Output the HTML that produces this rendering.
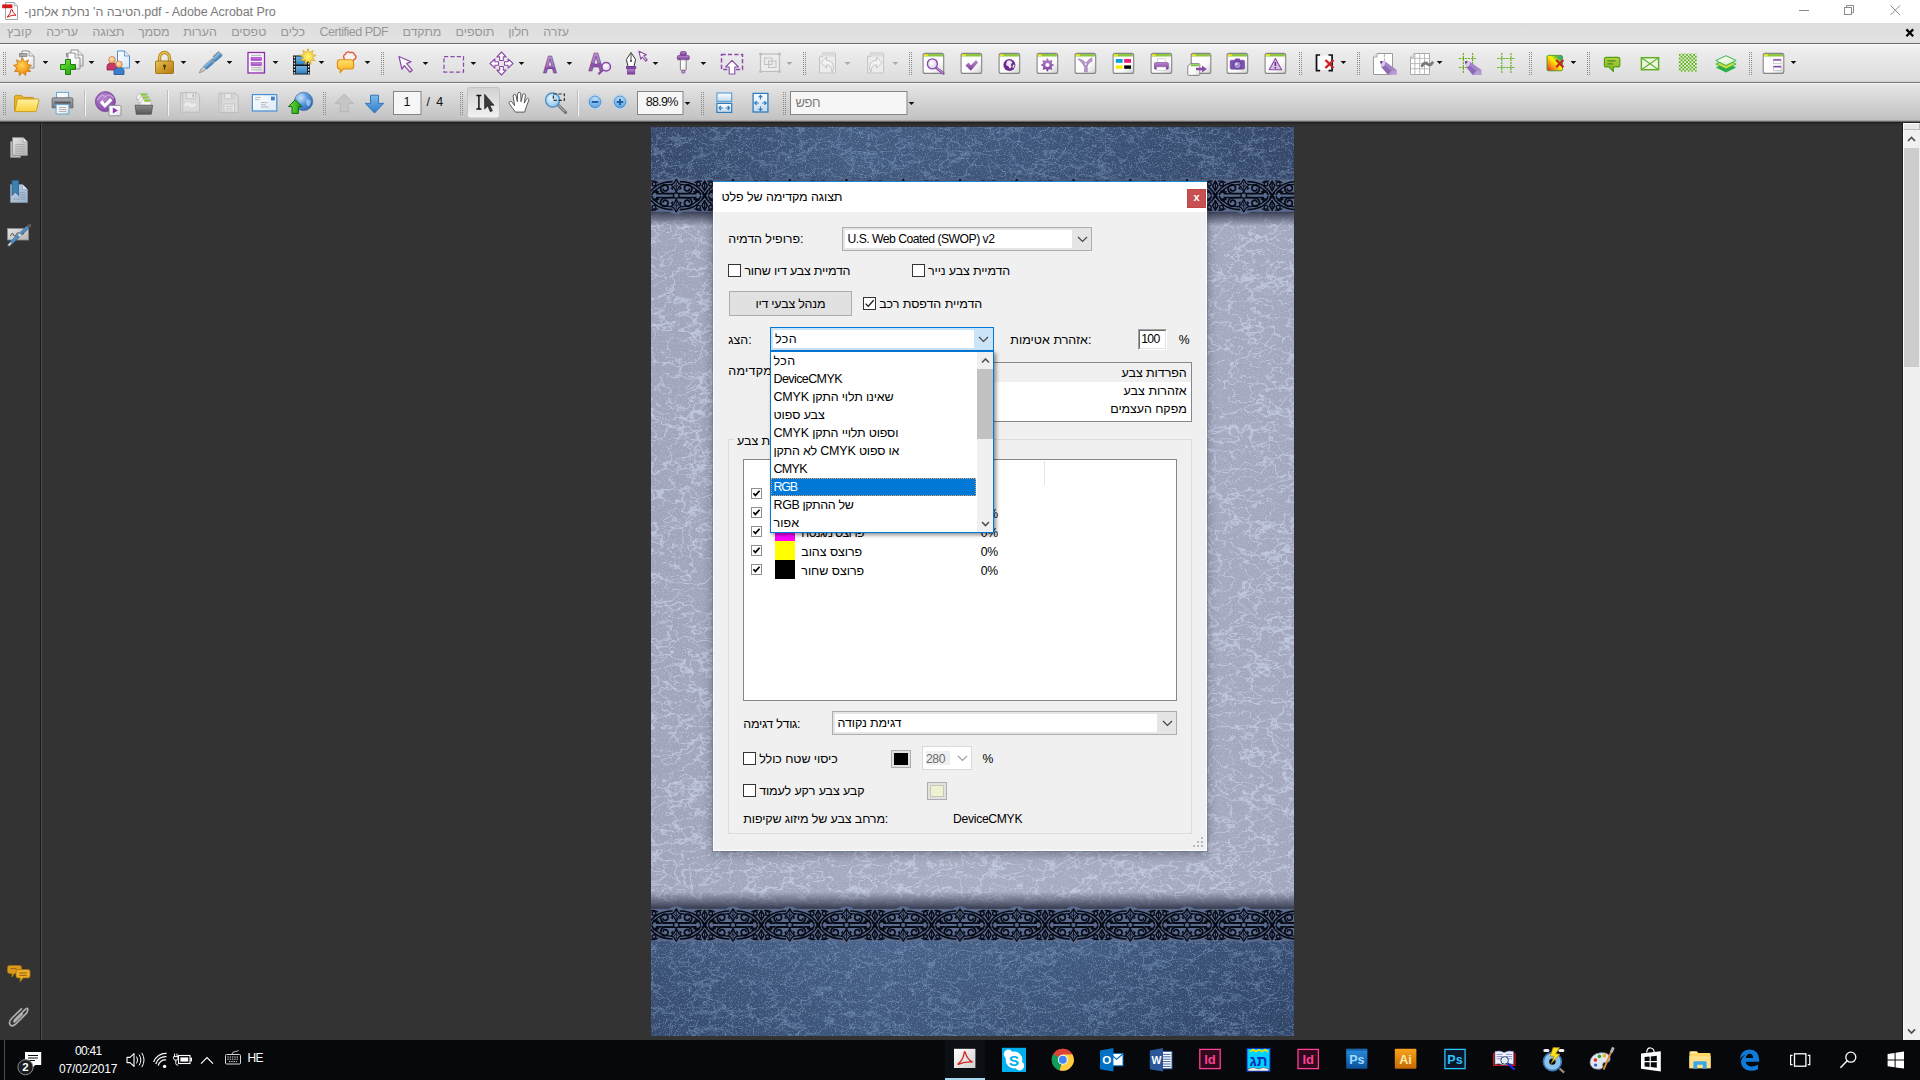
<!DOCTYPE html>
<html lang="he" dir="ltr">
<head>
<meta charset="utf-8">
<title>Adobe Acrobat Pro</title>
<style>
*{box-sizing:border-box;margin:0;padding:0}
html,body{width:1920px;height:1080px;overflow:hidden;background:#333;font-family:"Liberation Sans","DejaVu Sans",sans-serif;font-size:12px;color:#000}
.abs{position:absolute}
.t{position:absolute;white-space:nowrap;font-size:12.5px;line-height:14px;color:#000;direction:ltr}
#page{position:absolute;left:651px;top:127px;width:643px;height:909px;overflow:hidden}
#dlgc{position:absolute;left:0;top:0;width:1920px;height:1080px}

#titlebar{position:absolute;left:0;top:0;width:1920px;height:23px;background:#fff}
#menubar{position:absolute;left:0;top:23px;width:1920px;height:21px;background:linear-gradient(#dedede,#e2e2e2 19px,#dadada 20px,#6e6e6e 20px)}
#tb1{position:absolute;left:0;top:44px;width:1920px;height:39px;background:linear-gradient(#f6f6f6 0,#ededed 6px,#e6e6e6 20px,#dcdcdc 37px,#c9c9c9 38px,#7b7b7b 38px)}
#tb2{position:absolute;left:0;top:83px;width:1920px;height:39px;background:linear-gradient(#f4f4f4 0,#e5e5e5 2px,#d3d3d3 19px,#c5c5c5 34px,#bfbfbf 37px,#8a8a8a 38px,#444 39px)}
#main{position:absolute;left:0;top:122px;width:1920px;height:918px;background:linear-gradient(#1c1c1c 0,#2d2d2d 2px,#333 4px)}
#taskbar{position:absolute;left:0;top:1040px;width:1920px;height:40px;background:#06080c}

#t1{letter-spacing:-0.097px}#t2{letter-spacing:-0.068px}#t3{letter-spacing:-0.507px}#t4{letter-spacing:-0.236px}#t5{letter-spacing:-0.150px}#t6{letter-spacing:-0.234px}#t7{letter-spacing:-0.065px}#t8{letter-spacing:-0.029px}#t9{letter-spacing:0.019px}#t10{letter-spacing:-0.665px}#t11{letter-spacing:-1.094px}#t12{letter-spacing:0.251px}#t13{letter-spacing:-0.063px}#t14{letter-spacing:0.028px}#t15{letter-spacing:-0.087px}#t16{letter-spacing:-0.063px}#t17{letter-spacing:-0.120px}#t18{letter-spacing:0.551px}#t19{letter-spacing:-0.362px}#t20{letter-spacing:-0.742px}#t21{letter-spacing:-0.362px}#t22{letter-spacing:-0.055px}#t23{letter-spacing:-0.362px}#t24{letter-spacing:-0.036px}#t25{letter-spacing:-0.362px}#t26{letter-spacing:-0.286px}#t27{letter-spacing:-0.109px}#t28{letter-spacing:-0.081px}#t29{letter-spacing:-0.415px}#t30{letter-spacing:-0.344px}#t31{letter-spacing:-0.131px}#t32{letter-spacing:-0.142px}#t33{letter-spacing:-0.337px}#t34{letter-spacing:0.447px}#t35{letter-spacing:0.380px}#t36{letter-spacing:-0.588px}#t37{letter-spacing:-0.171px}#t38{letter-spacing:-0.088px}#t39{letter-spacing:-0.185px}#t40{letter-spacing:-0.196px}#t41{letter-spacing:-0.669px}#t42{letter-spacing:-1.200px}#t43{letter-spacing:-0.395px}#t44{letter-spacing:0.073px}#c1{letter-spacing:-0.058px}#c2{letter-spacing:0.136px}#c3{letter-spacing:0.102px}#c4{letter-spacing:0.009px}#c5{letter-spacing:-0.122px}#c6{letter-spacing:-0.013px}#c7{letter-spacing:-0.104px}#c8{letter-spacing:0.070px}#c9{letter-spacing:-0.487px}#c10{letter-spacing:-0.138px}#c11{letter-spacing:-0.019px}#c12{letter-spacing:-0.165px}#c13{letter-spacing:0.038px}#c14{letter-spacing:-0.253px}#c15{letter-spacing:1.465px}#c16{letter-spacing:-0.731px}#c17{letter-spacing:-0.428px}#c18{letter-spacing:-0.686px}#c19{letter-spacing:-0.176px}#c20{letter-spacing:-0.736px}
</style>
</head>
<body>
<div id="main"></div>
<div id="titlebar"></div><svg class="abs" style="left:2px;top:1px" width="18" height="20" viewBox="0 0 18 20"><path d="M3.5,1.5 h8.6 l3.4,3.4 v13.6 h-12 z" fill="#fdfdfd" stroke="#9a9a9a" stroke-width=".9"/><path d="M12.1,1.5 v3.4 h3.4" fill="#e4e4e4" stroke="#9a9a9a" stroke-width=".7"/><rect x="0.2" y="3.4" width="10.2" height="3.8" fill="#d31c1c"/><path d="M5.2,16.2 Q8.6,12.6 9.2,8.6 Q9.4,7.6 10,8.6 Q10.6,12 14,14.2 Q10,13.6 5.2,16.2 Z" fill="none" stroke="#d31c1c" stroke-width="1"/></svg><span class="t" id="c1" style="left:24.25px;top:5.37px;font-size:12.5px;color:#7a7a7a;">-הטיבה ה' נחלת אלחנן.pdf - Adobe Acrobat Pro</span><svg class="abs" style="left:1790px;top:0" width="130" height="23" viewBox="1790 0 130 23"><path d="M1799,10.5 h10" stroke="#8a8a8a" stroke-width="1"/><rect x="1844.5" y="7.5" width="7" height="7" fill="#fff" stroke="#8a8a8a" stroke-width="1"/><path d="M1846.5,7.5 v-2 h7 v7 h-2" fill="none" stroke="#8a8a8a" stroke-width="1"/><path d="M1890.5,5.5 l9.5,9.5 M1900,5.5 l-9.5,9.5" stroke="#8a8a8a" stroke-width="1"/></svg>
<div id="menubar"></div><span class="t" id="c2" style="left:7.00px;top:25.17px;font-size:12.5px;color:#979797;">קובץ</span><span class="t" id="c3" style="left:46.25px;top:25.17px;font-size:12.5px;color:#979797;">עריכה</span><span class="t" id="c4" style="left:92.50px;top:25.17px;font-size:12.5px;color:#979797;">תצוגה</span><span class="t" id="c5" style="left:138.00px;top:25.17px;font-size:12.5px;color:#979797;">מסמך</span><span class="t" id="c6" style="left:183.25px;top:25.17px;font-size:12.5px;color:#979797;">הערות</span><span class="t" id="c7" style="left:231.25px;top:25.17px;font-size:12.5px;color:#979797;">טפסים</span><span class="t" id="c8" style="left:280.50px;top:25.17px;font-size:12.5px;color:#979797;">כלים</span><span class="t" id="c9" style="left:319.50px;top:25.17px;font-size:12.5px;color:#979797;">Certified PDF</span><span class="t" id="c10" style="left:402.50px;top:25.17px;font-size:12.5px;color:#979797;">מתקדם</span><span class="t" id="c11" style="left:455.50px;top:25.17px;font-size:12.5px;color:#979797;">תוספים</span><span class="t" id="c12" style="left:508.25px;top:25.17px;font-size:12.5px;color:#979797;">חלון</span><span class="t" id="c13" style="left:543.25px;top:25.17px;font-size:12.5px;color:#979797;">עזרה</span><svg class="abs" style="left:1904px;top:27px" width="12" height="12" viewBox="0 0 12 12"><path d="M2.4,2.4 L9.2,9.2 M9.2,2.4 L2.4,9.2" stroke="#000" stroke-width="2.2"/></svg>
<div id="tb1"></div><div id="tb2"></div>
<svg class="abs" style="left:0;top:0" width="1920" height="124" viewBox="0 0 1920 124"><defs>
<linearGradient id="pgw" x1="0" y1="0" x2="1" y2="1"><stop offset="0" stop-color="#fff"/><stop offset=".6" stop-color="#f6f6f6"/><stop offset="1" stop-color="#d8d8d8"/></linearGradient>
<linearGradient id="pgb" x1="0" y1="0" x2="1" y2="1"><stop offset="0" stop-color="#fff"/><stop offset="1" stop-color="#d3e6f7"/></linearGradient>
<linearGradient id="gwin" x1="0" y1="0" x2="1" y2="1"><stop offset="0" stop-color="#fff"/><stop offset=".65" stop-color="#fafafa"/><stop offset="1" stop-color="#d0d0d0"/></linearGradient>
<radialGradient id="gor" cx=".45" cy=".4" r=".6"><stop offset="0" stop-color="#ffd257"/><stop offset=".6" stop-color="#f7a31e"/><stop offset="1" stop-color="#e08212"/></radialGradient>
<radialGradient id="gyel" cx=".5" cy=".5" r=".6"><stop offset="0" stop-color="#fff27a"/><stop offset="1" stop-color="#f5c31a"/></radialGradient>
<linearGradient id="gyel2" x1="0" y1="0" x2="0" y2="1"><stop offset="0" stop-color="#ffe36a"/><stop offset="1" stop-color="#f9a81c"/></linearGradient>
<linearGradient id="ggr" x1="0" y1="0" x2="1" y2="1"><stop offset="0" stop-color="#8ee85a"/><stop offset=".5" stop-color="#3fc21e"/><stop offset="1" stop-color="#249a10"/></linearGradient>
<radialGradient id="gskin" cx=".4" cy=".35" r=".7"><stop offset="0" stop-color="#ffe3bf"/><stop offset="1" stop-color="#f0a45e"/></radialGradient>
<linearGradient id="ggold" x1="0" y1="0" x2="1" y2="1"><stop offset="0" stop-color="#e8c55e"/><stop offset=".5" stop-color="#d09a2a"/><stop offset="1" stop-color="#b47c16"/></linearGradient>
<linearGradient id="gpen" x1="0" y1="0" x2="0" y2="1"><stop offset="0" stop-color="#a9d3ef"/><stop offset=".5" stop-color="#5a9bd0"/><stop offset="1" stop-color="#3c78b0"/></linearGradient>
<linearGradient id="gpur" x1="0" y1="0" x2="0" y2="1"><stop offset="0" stop-color="#d68af0"/><stop offset="1" stop-color="#a23cc8"/></linearGradient>
<linearGradient id="gpur2" x1="0" y1="0" x2="0" y2="1"><stop offset="0" stop-color="#b98ad0"/><stop offset="1" stop-color="#7a3a9c"/></linearGradient>
<linearGradient id="gA" x1="0" y1="0" x2="0" y2="1"><stop offset="0" stop-color="#c9a6dc"/><stop offset=".55" stop-color="#a876c4"/><stop offset=".56" stop-color="#8a4eaa"/><stop offset="1" stop-color="#a87cc2"/></linearGradient>
<radialGradient id="glens" cx=".4" cy=".35" r=".7"><stop offset="0" stop-color="#fff"/><stop offset="1" stop-color="#dccbe8"/></radialGradient>
<linearGradient id="gfilm" x1="0" y1="0" x2="0" y2="1"><stop offset="0" stop-color="#6fb4e2"/><stop offset="1" stop-color="#2f7fc0"/></linearGradient>
<linearGradient id="grainb" x1="0" y1="1" x2="1" y2="0"><stop offset="0" stop-color="#e8201c"/><stop offset=".3" stop-color="#f7931e"/><stop offset=".55" stop-color="#fff200"/><stop offset=".8" stop-color="#4cb848"/><stop offset="1" stop-color="#1c9ad6"/></linearGradient>
<linearGradient id="ggb" x1="0" y1="0" x2="0" y2="1"><stop offset="0" stop-color="#b5cf3e"/><stop offset="1" stop-color="#8aae2a"/></linearGradient>
<linearGradient id="glay" x1="0" y1="0" x2="1" y2="1"><stop offset="0" stop-color="#fff"/><stop offset="1" stop-color="#d5ebc6"/></linearGradient>
<pattern id="chk" width="3.6" height="3.6" patternUnits="userSpaceOnUse"><rect width="3.6" height="3.6" fill="#e8f2da"/><rect width="1.8" height="1.8" fill="#5fae22"/><rect x="1.8" y="1.8" width="1.8" height="1.8" fill="#5fae22"/></pattern>

<linearGradient id="gpress" x1="0" y1="0" x2="0" y2="1"><stop offset="0" stop-color="#d2d2d2"/><stop offset="1" stop-color="#f2f2f2"/></linearGradient>
<linearGradient id="gfold" x1="0" y1="0" x2="0" y2="1"><stop offset="0" stop-color="#fff3a0"/><stop offset="1" stop-color="#f9d03c"/></linearGradient>
<linearGradient id="gprn" x1="0" y1="0" x2="0" y2="1"><stop offset="0" stop-color="#a6abb0"/><stop offset="1" stop-color="#767b80"/></linearGradient>
<radialGradient id="gpfl" cx=".4" cy=".3" r=".8"><stop offset="0" stop-color="#b98ad2"/><stop offset="1" stop-color="#7c3fa0"/></radialGradient>
<linearGradient id="gorg" x1="0" y1="0" x2="0" y2="1"><stop offset="0" stop-color="#8a8a8a"/><stop offset="1" stop-color="#5a5a5a"/></linearGradient>
<linearGradient id="gmail" x1="0" y1="0" x2="1" y2="1"><stop offset="0" stop-color="#fff"/><stop offset="1" stop-color="#dce8f4"/></linearGradient>
<radialGradient id="gglobe" cx=".35" cy=".3" r=".8"><stop offset="0" stop-color="#cfe6fa"/><stop offset=".45" stop-color="#5a9ade"/><stop offset="1" stop-color="#2a5ea8"/></radialGradient>
<linearGradient id="ggr2" x1="0" y1="0" x2="1" y2="0"><stop offset="0" stop-color="#6ee03a"/><stop offset="1" stop-color="#1f9a10"/></linearGradient>
<linearGradient id="gblu" x1="0" y1="0" x2="0" y2="1"><stop offset="0" stop-color="#2f7cc8"/><stop offset="1" stop-color="#7cbcec"/></linearGradient>
<radialGradient id="gzl" cx=".4" cy=".35" r=".7"><stop offset="0" stop-color="#e6f3fc"/><stop offset="1" stop-color="#8cc4ec"/></radialGradient>
<radialGradient id="gzb" cx=".5" cy=".25" r=".8"><stop offset="0" stop-color="#bfe0f8"/><stop offset="1" stop-color="#4f9ad8"/></radialGradient>
<linearGradient id="gfit" x1="0" y1="0" x2="0" y2="1"><stop offset="0" stop-color="#fff"/><stop offset="1" stop-color="#c4d8ec"/></linearGradient>
</defs><path d="M3.5,52 V75" stroke="#8a8a8a" stroke-width="1" stroke-dasharray="1 1"/><path d="M5.5,52 V75" stroke="#8a8a8a" stroke-width="1" stroke-dasharray="1 1"/><g transform="translate(26.0,63.0)"><path d="M-4,-12 h7 l5,5 v12 h-12 z" fill="url(#pgw)" stroke="#8f8f8f" stroke-width="1" stroke-linejoin="round"/><path d="M3,-12 v5 h5" fill="#e9e9e9" stroke="#8f8f8f" stroke-width="0.8" stroke-linejoin="round"/><rect x="-6.5" y="-9.5" width="7.5" height="3" fill="#a9a9a9" stroke="#7d7d7d" stroke-width=".7"/><polygon points="-3.50,-5.30 -1.58,-1.26 2.48,-3.12 1.35,1.20 5.66,2.39 2.01,4.97 4.55,8.65 0.10,8.29 -0.32,12.74 -3.50,9.60 -6.68,12.74 -7.10,8.29 -11.55,8.65 -9.01,4.97 -12.66,2.39 -8.35,1.20 -9.48,-3.12 -5.42,-1.26" fill="url(#gor)" stroke="#c77a12" stroke-width="0.8" stroke-linejoin="round"/></g><path d="M42.6,61.1 h5.8 l-2.9,3 z" fill="#111"/><g transform="translate(72.0,63.0)"><rect x="-5.5" y="-9.5" width="7" height="3" fill="#a9a9a9" stroke="#7d7d7d" stroke-width=".7"/><path d="M-1,-13 h7 l5,5 v11 h-12 z" fill="url(#pgw)" stroke="#8f8f8f" stroke-width="1" stroke-linejoin="round"/><path d="M6,-13 v5 h5" fill="#e9e9e9" stroke="#8f8f8f" stroke-width="0.8" stroke-linejoin="round"/><path d="M-4,-10 h7 l5,5 v11 h-12 z" fill="url(#pgw)" stroke="#8f8f8f" stroke-width="1" stroke-linejoin="round"/><path d="M3,-10 v5 h5" fill="#e9e9e9" stroke="#8f8f8f" stroke-width="0.8" stroke-linejoin="round"/><path d="M-7,-2 h5 v5 h5 v5 h-5 v5 h-5 v-5 h-5 v-5 h5 z" transform="translate(0.5,-1.5)" fill="url(#ggr)" stroke="#1f7d12" stroke-width="1" stroke-linejoin="round"/></g><path d="M88.6,61.1 h5.8 l-2.9,3 z" fill="#111"/><g transform="translate(118.5,63.0)"><path d="M-1,-12 h7 l5,5 v12 h-12 z" fill="url(#pgb)" stroke="#4a8fd4" stroke-width="1" stroke-linejoin="round"/><path d="M6,-12 v5 h5" fill="#e9e9e9" stroke="#4a8fd4" stroke-width="0.8" stroke-linejoin="round"/><path d="M-11.5,7 v-3.5 q0,-3.5 5,-3.5 q5,0 5,3.5 v3.5 z" fill="#c8386a" stroke="#8e1e45" stroke-width=".8"/><circle cx="-6.5" cy="-3.2" r="3.3" fill="url(#gskin)" stroke="#c27a3c" stroke-width=".7"/><path d="M-4.5,11.5 v-3.5 q0,-3.5 5,-3.5 q5,0 5,3.5 v3.5 z" fill="#3b7fcc" stroke="#1e4f94" stroke-width=".8"/><circle cx="0.5" cy="1.2999999999999998" r="3.3" fill="url(#gskin)" stroke="#c27a3c" stroke-width=".7"/></g><path d="M134.6,61.1 h5.8 l-2.9,3 z" fill="#111"/><g transform="translate(165.0,63.0)"><path d="M-5.5,-1 v-4 a5,5.5 0 0 1 10,0 v4" fill="none" stroke="#b98a1e" stroke-width="3.4"/><path d="M-5.5,-1 v-4 a5,5.5 0 0 1 10,0 v4" fill="none" stroke="#e7c259" stroke-width="1.4"/><rect x="-9.5" y="-2" width="18" height="12.5" rx="1" fill="url(#ggold)" stroke="#9c6f12" stroke-width=".9"/><circle cx="-0.5" cy="3" r="1.4" fill="#4a3208"/><rect x="-1.1" y="3" width="1.2" height="3.6" fill="#4a3208"/></g><path d="M180.6,61.1 h5.8 l-2.9,3 z" fill="#111"/><g transform="translate(210.5,63.0)"><g transform="rotate(-41)"><path d="M-15,0 l4,-1.6 h4 v3.2 h-4 z" fill="#c8c8c8" stroke="#7a7a7a" stroke-width=".6"/><rect x="-7" y="-2.2" width="9" height="4.4" fill="url(#gpen)" stroke="#3f74a8" stroke-width=".6"/><rect x="2" y="-2.4" width="2" height="4.8" fill="#9a9a9a"/><rect x="4" y="-2.2" width="10" height="4.4" rx="1.5" fill="url(#gpen)" stroke="#3f74a8" stroke-width=".6"/><rect x="6" y="-3.6" width="8" height="1.2" fill="#8a8a8a"/></g></g><path d="M226.6,61.1 h5.8 l-2.9,3 z" fill="#111"/><g transform="translate(256.5,63.0)"><rect x="-8.5" y="-10.5" width="16.5" height="20.5" fill="url(#pgw)" stroke="#8e2cb0" stroke-width="1.3"/><rect x="-5.5" y="-5.8" width="10.5" height="3.2" fill="url(#gpur)" stroke="#8e2cb0" stroke-width=".5"/><rect x="-5.5" y="-0.6" width="10.5" height="3.2" fill="url(#gpur)" stroke="#8e2cb0" stroke-width=".5"/><path d="M-5.5,-7.7 h10.5 M-5.5,4.6 h10.5 M-5.5,6.8 h10.5" stroke="#a9a9a9" stroke-width=".9"/></g><path d="M272.6,61.1 h5.8 l-2.9,3 z" fill="#111"/><g transform="translate(303.5,63.0)"><rect x="-10.5" y="-7.5" width="17" height="19" fill="#111"/><rect x="-7.6" y="-6.5" width="11.2" height="8" fill="url(#gfilm)"/><rect x="-7.6" y="3" width="11.2" height="7.6" fill="url(#gfilm)"/><rect x="-9.8" y="-6.4" width="1.4" height="1.7" fill="#ddd"/><rect x="4.5" y="-6.4" width="1.4" height="1.7" fill="#ddd"/><rect x="-9.8" y="-3.3" width="1.4" height="1.7" fill="#ddd"/><rect x="4.5" y="-3.3" width="1.4" height="1.7" fill="#ddd"/><rect x="-9.8" y="-0.2" width="1.4" height="1.7" fill="#ddd"/><rect x="4.5" y="-0.2" width="1.4" height="1.7" fill="#ddd"/><rect x="-9.8" y="2.9" width="1.4" height="1.7" fill="#ddd"/><rect x="4.5" y="2.9" width="1.4" height="1.7" fill="#ddd"/><rect x="-9.8" y="6.0" width="1.4" height="1.7" fill="#ddd"/><rect x="4.5" y="6.0" width="1.4" height="1.7" fill="#ddd"/><rect x="-9.8" y="9.1" width="1.4" height="1.7" fill="#ddd"/><rect x="4.5" y="9.1" width="1.4" height="1.7" fill="#ddd"/><polygon points="4.50,-14.50 5.97,-10.34 9.77,-12.58 8.22,-8.45 12.58,-7.72 8.73,-5.55 11.60,-2.20 7.26,-3.01 7.30,1.41 4.50,-2.00 1.70,1.41 1.74,-3.01 -2.60,-2.20 0.27,-5.55 -3.58,-7.72 0.78,-8.45 -0.77,-12.58 3.03,-10.34" fill="url(#gyel)" stroke="#d8a516" stroke-width="0.7" stroke-linejoin="round"/></g><path d="M318.6,61.1 h5.8 l-2.9,3 z" fill="#111"/><g transform="translate(349.0,63.0)"><path transform="translate(-5.2,-1.4) scale(.8)" d="M1.2,-3.4 a3.1,3.1 0 0 1 0.6,-5.6 a3.6,3.6 0 0 1 6.2,-2 a3.6,3.6 0 0 1 5.6,2.6 a3.1,3.1 0 0 1 -0.8,5.8 a3,3 0 0 1 -3.6,1.6" fill="#f6f0ee" stroke="#e2563c" stroke-width="1.7" stroke-linejoin="round"/><path d="M-9,-3.2 h11 q2.6,0 2.6,2.6 v4 q0,2.6 -2.6,2.6 h-7.6 l-3.2,3.6 v-3.6 h-0.2 q-2.6,0 -2.6,-2.6 v-4 q0,-2.6 2.6,-2.6 z" fill="url(#gyel2)" stroke="#df8c12" stroke-width="1.1" stroke-linejoin="round"/></g><path d="M364.6,61.1 h5.8 l-2.9,3 z" fill="#111"/><path d="M381.5,52 V75" stroke="#8a8a8a" stroke-width="1" stroke-dasharray="1 1"/><path d="M383.5,52 V75" stroke="#8a8a8a" stroke-width="1" stroke-dasharray="1 1"/><g transform="translate(405.5,64.0)"><path d="M-6.5,-7.5 L5.5,-2.2 L1.2,-0.4 L6.8,6.2 L4.4,8.2 L-1.2,1.6 L-3.6,5.2 Z" transform="scale(1.0)" fill="url(#pgw)" stroke="#8a4aa8" stroke-width="1.2" stroke-linejoin="round"/></g><path d="M422.6,62.1 h5.8 l-2.9,3 z" fill="#111"/><g transform="translate(454.0,64.0)"><rect x="-10" y="-7.5" width="19.5" height="15.5" fill="none" stroke="#8a4aa8" stroke-width="1.25" stroke-dasharray="4.2 2.2"/></g><path d="M470.5,62.1 h5.8 l-2.9,3 z" fill="#111"/><g transform="translate(501.5,63.5)"><path d="M0,-11.5 L4.6,-6.6 H1.8 V-3 H-1.8 V-6.6 H-4.6 Z" transform="rotate(0)" fill="#fff" stroke="#8a4aa8" stroke-width="1.1" stroke-linejoin="round"/><path d="M0,-11.5 L4.6,-6.6 H1.8 V-3 H-1.8 V-6.6 H-4.6 Z" transform="rotate(90)" fill="#fff" stroke="#8a4aa8" stroke-width="1.1" stroke-linejoin="round"/><path d="M0,-11.5 L4.6,-6.6 H1.8 V-3 H-1.8 V-6.6 H-4.6 Z" transform="rotate(180)" fill="#fff" stroke="#8a4aa8" stroke-width="1.1" stroke-linejoin="round"/><path d="M0,-11.5 L4.6,-6.6 H1.8 V-3 H-1.8 V-6.6 H-4.6 Z" transform="rotate(270)" fill="#fff" stroke="#8a4aa8" stroke-width="1.1" stroke-linejoin="round"/></g><path d="M518.6,62.1 h5.8 l-2.9,3 z" fill="#111"/><g transform="translate(550.0,64.0)"><text x="0" y="9" font-family="Liberation Sans,sans-serif" font-weight="bold" font-size="23.5" text-anchor="middle" fill="url(#gA)" stroke="#5e2a7c" stroke-width=".7" transform="scale(.82,1)">A</text></g><path d="M566.5,62.1 h5.8 l-2.9,3 z" fill="#111"/><g transform="translate(600.0,63.0)"><text x="-5" y="8" font-family="Liberation Sans,sans-serif" font-weight="bold" font-size="26" text-anchor="middle" fill="url(#gA)" stroke="#5e2a7c" stroke-width=".7" transform="scale(.82,1)">A</text><path d="M-1,10.6 L3,6.8" stroke="#8a4aa8" stroke-width="2.2" stroke-linecap="round"/><circle cx="6.2" cy="3.8" r="4.3" fill="url(#glens)" stroke="#8a4aa8" stroke-width="1.5"/></g><g transform="translate(636.0,63.0)"><path d="M-5,-10.5 L-0.4,-3.5 L-2,3.5 H-8 L-9.6,-3.5 Z" fill="#fff" stroke="#333" stroke-width="1"/><path d="M-5,-9 V-2.5" stroke="#333" stroke-width=".9"/><circle cx="-5" cy="-2" r="1" fill="#333"/><rect x="-9.6" y="3.5" width="9.4" height="2.2" fill="#8a4aa8" stroke="#6a2c8a" stroke-width=".6"/><rect x="-8.6" y="5.7" width="7.4" height="5.4" fill="url(#gpur2)" stroke="#6a2c8a" stroke-width=".6"/><g transform="translate(7,-7) scale(.62)"><path d="M-6.5,-7.5 L5.5,-2.2 L1.2,-0.4 L6.8,6.2 L4.4,8.2 L-1.2,1.6 L-3.6,5.2 Z" transform="scale(1.0)" fill="url(#pgw)" stroke="#8a4aa8" stroke-width="1.8" stroke-linejoin="round"/></g></g><path d="M652.6,62.1 h5.8 l-2.9,3 z" fill="#111"/><g transform="translate(683.3,63.0)"><rect x="-3" y="-11.5" width="6" height="4" rx="1.5" fill="url(#gpur2)" stroke="#6a2c8a" stroke-width=".7"/><rect x="-6" y="-7.6" width="12" height="4.4" rx="1.6" fill="url(#gpur2)" stroke="#6a2c8a" stroke-width=".7"/><rect x="-2.9" y="-3.2" width="5.8" height="10.5" rx="1" fill="url(#pgw)" stroke="#777" stroke-width=".9"/><rect x="-1.6" y="7.3" width="3.2" height="2.8" rx="1" fill="#c9a3dc" stroke="#6a2c8a" stroke-width=".7"/></g><path d="M700.5,62.1 h5.8 l-2.9,3 z" fill="#111"/><g transform="translate(732.0,63.0)"><rect x="-10.5" y="-8.5" width="21" height="15" fill="none" stroke="#8a4aa8" stroke-width="1.5" stroke-dasharray="4.2 2.2"/><path d="M0,-2.6 L6.4,4 H2.8 V11 H-2.8 V4 H-6.4 Z" fill="#fff" stroke="#8a4aa8" stroke-width="1.1" stroke-linejoin="round"/></g><g transform="translate(770.0,63.0)"><rect x="-9.5" y="-9" width="19" height="17.5" fill="#ececec" stroke="#bdbdbd" stroke-width="1.2"/><circle cx="-9.5" cy="-9" r="1.5" fill="#bdbdbd"/><circle cx="9.5" cy="-9" r="1.5" fill="#bdbdbd"/><circle cx="-9.5" cy="8.5" r="1.5" fill="#bdbdbd"/><circle cx="9.5" cy="8.5" r="1.5" fill="#bdbdbd"/><rect x="-5.5" y="-5" width="7.5" height="6.5" fill="none" stroke="#bdbdbd" stroke-width=".9"/><rect x="-1.5" y="-2" width="7.5" height="6.5" fill="none" stroke="#bdbdbd" stroke-width=".9"/></g><path d="M786.6,62.1 h5.8 l-2.9,3 z" fill="#a8a8a8"/><path d="M803.5,52 V75" stroke="#8a8a8a" stroke-width="1" stroke-dasharray="1 1"/><path d="M805.5,52 V75" stroke="#8a8a8a" stroke-width="1" stroke-dasharray="1 1"/><g transform="translate(827.5,63.5)"><path d="M-4.5,-10.5 h12.5 v20 h-16 v-16.5 z" fill="#ececec" stroke="#c4c4c4" stroke-width="1" stroke-linejoin="round"/><path d="M-4.5,-10.5 v3.5 h-3.5" fill="#e9e9e9" stroke="#c4c4c4" stroke-width="0.8" stroke-linejoin="round"/><rect x="-4" y="-10" width="11.5" height="3" fill="#dcdcdc"/><path d="M-6.5,-1 L-1,-6.5 V-3.2 Q6,-3.2 6,4.6 Q6,7 4.6,8.6 Q4.6,1.4 -1,1.4 V4.6 Z" fill="#f2f2f2" stroke="#c4c4c4" stroke-width="1" stroke-linejoin="round"/></g><path d="M844.6,62.1 h5.8 l-2.9,3 z" fill="#a8a8a8"/><g transform="translate(875.6,63.5)"><path d="M-4.5,-10.5 h12.5 v20 h-16 v-16.5 z" fill="#ececec" stroke="#c4c4c4" stroke-width="1" stroke-linejoin="round"/><path d="M-4.5,-10.5 v3.5 h-3.5" fill="#e9e9e9" stroke="#c4c4c4" stroke-width="0.8" stroke-linejoin="round"/><rect x="-4" y="-10" width="11.5" height="3" fill="#dcdcdc"/><g transform="scale(-1,1)"><path d="M-6.5,-1 L-1,-6.5 V-3.2 Q6,-3.2 6,4.6 Q6,7 4.6,8.6 Q4.6,1.4 -1,1.4 V4.6 Z" fill="#f2f2f2" stroke="#c4c4c4" stroke-width="1" stroke-linejoin="round"/></g></g><path d="M892.5,62.1 h5.8 l-2.9,3 z" fill="#a8a8a8"/><path d="M909.5,52 V75" stroke="#8a8a8a" stroke-width="1" stroke-dasharray="1 1"/><path d="M911.5,52 V75" stroke="#8a8a8a" stroke-width="1" stroke-dasharray="1 1"/><g transform="translate(933.4,63.4)"><rect x="-10.3" y="-10.0" width="20.6" height="20" rx="2" fill="url(#gwin)" stroke="#858585" stroke-width="1.1"/><path d="M-9.5,-6.8 v-1.4 q0,-1.2 1.2,-1.2 h16.6 q1.2,0 1.2,1.2 v1.4 z" fill="#8dc63f"/><rect x="-9.3" y="-9.2" width="3.6" height="1.9" fill="#f5e61c"/><circle cx="-1" cy="0.5" r="5" fill="url(#glens)" stroke="#8a4aa8" stroke-width="1.4"/><path d="M3,4.6 L10,10" stroke="#8a4aa8" stroke-width="2.6" stroke-linecap="round"/><path d="M3.4,4.6 L9.8,9.6" stroke="#d9c3e6" stroke-width=".8"/></g><g transform="translate(971.4,63.4)"><rect x="-10.3" y="-10.0" width="20.6" height="20" rx="2" fill="url(#gwin)" stroke="#858585" stroke-width="1.1"/><path d="M-9.5,-6.8 v-1.4 q0,-1.2 1.2,-1.2 h16.6 q1.2,0 1.2,1.2 v1.4 z" fill="#8dc63f"/><rect x="-9.3" y="-9.2" width="3.6" height="1.9" fill="#f5e61c"/><path d="M-5.6,2 L-2.8,-0.4 L-0.6,2.4 L4.6,-2.8 L6.2,-0.8 L-0.6,7 Z" fill="url(#gpur2)" stroke="#6a2c8a" stroke-width=".4"/></g><g transform="translate(1009.4,63.4)"><rect x="-10.3" y="-10.0" width="20.6" height="20" rx="2" fill="url(#gwin)" stroke="#858585" stroke-width="1.1"/><path d="M-9.5,-6.8 v-1.4 q0,-1.2 1.2,-1.2 h16.6 q1.2,0 1.2,1.2 v1.4 z" fill="#8dc63f"/><rect x="-9.3" y="-9.2" width="3.6" height="1.9" fill="#f5e61c"/><circle cx="0" cy="1.6" r="6" fill="#6a2c8a"/><path d="M-2,-2.6 q2,-1 3.6,0 l1.4,2 l-1.6,1.4 l0.8,2.6 l-1.8,2 l-1.4,-2.6 l-2.2,-1 l0.2,-2.4 z M3.4,1 l1.8,0.6 l-0.6,2.6 l-1.4,0.6 z" fill="#efe4f5"/></g><g transform="translate(1047.4,63.4)"><rect x="-10.3" y="-10.0" width="20.6" height="20" rx="2" fill="url(#gwin)" stroke="#858585" stroke-width="1.1"/><path d="M-9.5,-6.8 v-1.4 q0,-1.2 1.2,-1.2 h16.6 q1.2,0 1.2,1.2 v1.4 z" fill="#8dc63f"/><rect x="-9.3" y="-9.2" width="3.6" height="1.9" fill="#f5e61c"/><polygon points="0.00,-4.80 1.57,-2.19 4.53,-2.93 3.79,0.03 6.40,1.60 3.79,3.17 4.53,6.13 1.57,5.39 0.00,8.00 -1.57,5.39 -4.53,6.13 -3.79,3.17 -6.40,1.60 -3.79,0.03 -4.53,-2.93 -1.57,-2.19" fill="url(#gpur2)" stroke="#6a2c8a" stroke-width="0.4" stroke-linejoin="round"/><circle cx="0" cy="1.6" r="2.1" fill="#fff"/></g><g transform="translate(1085.4,63.4)"><rect x="-10.3" y="-10.0" width="20.6" height="20" rx="2" fill="url(#gwin)" stroke="#858585" stroke-width="1.1"/><path d="M-9.5,-6.8 v-1.4 q0,-1.2 1.2,-1.2 h16.6 q1.2,0 1.2,1.2 v1.4 z" fill="#8dc63f"/><rect x="-9.3" y="-9.2" width="3.6" height="1.9" fill="#f5e61c"/><path d="M-7.4,-4.6 Q-1.6,-3.6 0.2,0 Q2.6,-3.6 6.4,-5.6 L6.6,-2.4 Q3,-0.6 1.8,2.4 L1.8,8.6 L-1,8.2 Q0.2,3.6 -2.2,1 Q-4,-1.2 -7.4,-4.6 Z" fill="#b99bcb" stroke="#8d6aa6" stroke-width=".6"/><circle cx="0.4" cy="0.6" r="1.3" fill="#fff" stroke="#8d6aa6" stroke-width=".5"/></g><g transform="translate(1123.4,63.4)"><rect x="-10.3" y="-10.0" width="20.6" height="20" rx="2" fill="url(#gwin)" stroke="#858585" stroke-width="1.1"/><path d="M-9.5,-6.8 v-1.4 q0,-1.2 1.2,-1.2 h16.6 q1.2,0 1.2,1.2 v1.4 z" fill="#8dc63f"/><rect x="-9.3" y="-9.2" width="3.6" height="1.9" fill="#f5e61c"/><rect x="-7.6" y="-4.4" width="6.8" height="3.8" fill="#00a0e9"/><rect x="0.8" y="-4.4" width="6.8" height="3.8" fill="#ed1e79"/><rect x="-7.6" y="2" width="6.8" height="3.4" fill="#ffeb00"/><rect x="0.8" y="2" width="6.8" height="3.4" fill="#000"/></g><g transform="translate(1161.4,63.4)"><rect x="-10.3" y="-10.0" width="20.6" height="20" rx="2" fill="url(#gwin)" stroke="#858585" stroke-width="1.1"/><path d="M-9.5,-6.8 v-1.4 q0,-1.2 1.2,-1.2 h16.6 q1.2,0 1.2,1.2 v1.4 z" fill="#8dc63f"/><rect x="-9.3" y="-9.2" width="3.6" height="1.9" fill="#f5e61c"/><rect x="-3.8" y="-4.6" width="7.6" height="4.4" fill="#fff" stroke="#b9b9b9" stroke-width=".6"/><rect x="-7" y="-0.8" width="14" height="6.6" rx="1.2" fill="url(#gpur2)" stroke="#6a2c8a" stroke-width=".5"/><rect x="-4.6" y="3.6" width="9.2" height="3.6" fill="#fff" stroke="#b9b9b9" stroke-width=".6"/></g><g transform="translate(1199.4,63.4)"><g transform="translate(1.6,-0.0)"><rect x="-9.8" y="-10.0" width="19.6" height="20" rx="2" fill="url(#gwin)" stroke="#858585" stroke-width="1.1"/><path d="M-9.0,-6.8 v-1.4 q0,-1.2 1.2,-1.2 h15.600000000000001 q1.2,0 1.2,1.2 v1.4 z" fill="#8dc63f"/><rect x="-8.8" y="-9.2" width="3.6" height="1.9" fill="#f5e61c"/></g><path d="M-11.6,2.6 l2.4,-2.4 h8.6 q1,0 1,1 v9.8 q0,1 -1,1 h-10 q-1,0 -1,-1 z" fill="url(#gwin)" stroke="#858585" stroke-width="1"/><path d="M-8.8,0.8 h7.8 q.6,0 .6,.6 v1.4 h-8.4 z" fill="#7cc242"/><path d="M-3.4,4.4 h6 v-2.2 l4.8,3.4 l-4.8,3.4 v-2.2 h-6 z" fill="#8a4aa8"/></g><g transform="translate(1237.4,63.4)"><rect x="-10.3" y="-10.0" width="20.6" height="20" rx="2" fill="url(#gwin)" stroke="#858585" stroke-width="1.1"/><path d="M-9.5,-6.8 v-1.4 q0,-1.2 1.2,-1.2 h16.6 q1.2,0 1.2,1.2 v1.4 z" fill="#8dc63f"/><rect x="-9.3" y="-9.2" width="3.6" height="1.9" fill="#f5e61c"/><rect x="-2.6" y="-5" width="5.2" height="2.4" rx=".8" fill="#8a4aa8"/><rect x="-7.2" y="-3.2" width="14.4" height="9" rx="1.4" fill="#8050b4" stroke="#5a3690" stroke-width=".5"/><circle cx="0" cy="1.6" r="3.9" fill="#a58bd0" stroke="#5a3690" stroke-width="1"/><circle cx="-1.1" cy="0.5" r="1.2" fill="#e6def2"/></g><g transform="translate(1275.4,63.4)"><rect x="-10.3" y="-10.0" width="20.6" height="20" rx="2" fill="url(#gwin)" stroke="#858585" stroke-width="1.1"/><path d="M-9.5,-6.8 v-1.4 q0,-1.2 1.2,-1.2 h16.6 q1.2,0 1.2,1.2 v1.4 z" fill="#8dc63f"/><rect x="-9.3" y="-9.2" width="3.6" height="1.9" fill="#f5e61c"/><path d="M0,-5 L6.2,6.4 H-6.2 Z" fill="#d9c2e6" stroke="#8a4aa8" stroke-width="1.1" stroke-linejoin="round"/><rect x="-.8" y="-1.4" width="1.6" height="4" fill="#6a2c8a"/><rect x="-.8" y="3.6" width="1.6" height="1.6" fill="#6a2c8a"/></g><path d="M1299.5,52 V75" stroke="#8a8a8a" stroke-width="1" stroke-dasharray="1 1"/><path d="M1301.5,52 V75" stroke="#8a8a8a" stroke-width="1" stroke-dasharray="1 1"/><g transform="translate(1324.5,63.0)"><rect x="-7" y="-7.5" width="14" height="14.5" fill="#fff" opacity=".85"/><path d="M-4.4,-8 H-8 V7.6 H-4.4 M4,-8 H7.6 V7.6 H4" fill="none" stroke="#111" stroke-width="1.7"/><path d="M1.0,-3.0 L9.0,5.0 M9.0,-3.0 L1.0,5.0" stroke="#cc1f1f" stroke-width="2.3"/></g><path d="M1340.5,61.1 h5.8 l-2.9,3 z" fill="#111"/><path d="M1357.5,52 V75" stroke="#8a8a8a" stroke-width="1" stroke-dasharray="1 1"/><path d="M1359.5,52 V75" stroke="#8a8a8a" stroke-width="1" stroke-dasharray="1 1"/><g transform="translate(1383.0,64.0)"><path d="M-5.9,-10.5 h15.4 v21 h-19 v-17.4 z" fill="#fff" stroke="#9a9a9a" stroke-width="1" stroke-linejoin="round"/><path d="M-5.9,-10.5 v3.6 h-3.6" fill="#e9e9e9" stroke="#9a9a9a" stroke-width="0.8" stroke-linejoin="round"/><path d="M1.4,-10 V1" stroke="#9a9a9a" stroke-width=".8" stroke-dasharray="3 1"/><g transform="translate(5.6,4.8)"><path d="M-8.4,-7.8 L-3.2,-7 L8.2,1.4 L8.2,6 L-0.6,6 L-7,-1.6 Z" fill="#b79ed2"/><path d="M-8.4,-7.8 L-3.2,-7 L8.2,1.4 L3,2 Z" fill="#a486c6"/><path d="M-8.4,-7.8 L-7,-1.6 L-0.6,6 L3,2 Z" fill="#8d6bb4"/><path d="M-8.4,-7.8 L-5.6,-7.4 L-7.6,-4.6 Z" fill="#5b3a86"/><path d="M-5.6,-7.4 L-3.2,-7 L-4.2,-2.8 L-7,-1.6 L-7.6,-4.6 Z" fill="#d9c9ea"/></g></g><g transform="translate(1420.5,64.0)"><path d="M-6.4,-10.5 h15.4 v21 h-19 v-17.4 z" fill="#fff" stroke="#a9a9a9" stroke-width="1" stroke-linejoin="round"/><path d="M-6.4,-10.5 v3.6 h-3.6" fill="#e9e9e9" stroke="#a9a9a9" stroke-width="0.8" stroke-linejoin="round"/><path d="M-5.6,-10 V10 M-0.8,-10 V10 M4,-10 V10 M-10,-5.6 H9 M-10,-0.4 H9 M-10,4.8 H9" stroke="#b4b4b4" stroke-width=".9"/><path d="M1.6,1.8 Q4.2,-2.6 7,0 Q9.6,2.4 12,-1.4" fill="none" stroke="#787878" stroke-width="2.8" stroke-linecap="round"/></g><path d="M1436.7,61.1 h5.8 l-2.9,3 z" fill="#111"/><g transform="translate(1468.2,63.5)"><path d="M-4.8,-10.5 V9.5 M4.4,-10.5 V9.5 M-9.4,-5 H8.6 M-9.4,4 H8.6" stroke="#6ab023" stroke-width="1.15" stroke-dasharray="2.2 .8"/><g transform="translate(5.2,5.4)"><path d="M-8.4,-7.8 L-3.2,-7 L8.2,1.4 L8.2,6 L-0.6,6 L-7,-1.6 Z" fill="#b79ed2"/><path d="M-8.4,-7.8 L-3.2,-7 L8.2,1.4 L3,2 Z" fill="#a486c6"/><path d="M-8.4,-7.8 L-7,-1.6 L-0.6,6 L3,2 Z" fill="#8d6bb4"/><path d="M-8.4,-7.8 L-5.6,-7.4 L-7.6,-4.6 Z" fill="#5b3a86"/><path d="M-5.6,-7.4 L-3.2,-7 L-4.2,-2.8 L-7,-1.6 L-7.6,-4.6 Z" fill="#d9c9ea"/></g></g><g transform="translate(1506.6,63.5)"><path d="M-4.8,-10.5 V9.5 M4.4,-10.5 V9.5 M-9.4,-5 H8.6 M-9.4,4 H8.6" stroke="#6ab023" stroke-width="1.15" stroke-dasharray="2.2 .8"/></g><path d="M1529.5,52 V75" stroke="#8a8a8a" stroke-width="1" stroke-dasharray="1 1"/><path d="M1531.5,52 V75" stroke="#8a8a8a" stroke-width="1" stroke-dasharray="1 1"/><g transform="translate(1558.0,63.0)"><rect x="-11" y="-7.6" width="15.5" height="15.4" rx="1.6" fill="url(#grainb)" stroke="#4b9a1c" stroke-width=".9"/><path d="M-1.8,-3.0 L5.4,4.2 M5.4,-3.0 L-1.8,4.2" stroke="#c3262a" stroke-width="2.3"/></g><path d="M1570.5,61.1 h5.8 l-2.9,3 z" fill="#111"/><path d="M1587.5,52 V75" stroke="#8a8a8a" stroke-width="1" stroke-dasharray="1 1"/><path d="M1589.5,52 V75" stroke="#8a8a8a" stroke-width="1" stroke-dasharray="1 1"/><g transform="translate(1612.0,63.5)"><path d="M-5.6,-6.2 h11.4 q2,0 2,2 v5.6 q0,2 -2,2 h-4.4 v4.6 l-4.6,-4.6 h-2.4 q-2,0 -2,-2 v-5.6 q0,-2 2,-2 z" fill="url(#ggb)" stroke="#4ca214" stroke-width="1.2" stroke-linejoin="round"/><path d="M-4.6,-2.6 h8.2 M-4.6,0.4 h5.6" stroke="#3f8c10" stroke-width="1.1"/></g><g transform="translate(1650.0,63.5)"><rect x="-8.6" y="-5.8" width="17.2" height="12" fill="#eef5e4" stroke="#62b026" stroke-width="1.5"/><path d="M-8.6,-5.8 L8.6,6.2 M8.6,-5.8 L-8.6,6.2" stroke="#62b026" stroke-width="1.1"/></g><g transform="translate(1687.8,63.0)"><rect x="-9" y="-9.4" width="18" height="18" fill="url(#chk)"/></g><g transform="translate(1726.0,63.7)"><path d="M0,1.6 L10.2,6.4 L0,11.4 L-10.2,6.4 Z" transform="translate(0,-2.6)" fill="#27b04a"/><path d="M0,1.6 L10.2,6.4 L0,11.4 L-10.2,6.4 Z" transform="translate(0,-6)" fill="#c6dc3c" stroke="#27b04a" stroke-width=".8"/><path d="M0,1.6 L10.2,6.4 L0,11.4 L-10.2,6.4 Z" transform="translate(0,-9.6)" fill="url(#glay)" stroke="#37b24a" stroke-width="1"/></g><path d="M1749.5,52 V75" stroke="#8a8a8a" stroke-width="1" stroke-dasharray="1 1"/><path d="M1751.5,52 V75" stroke="#8a8a8a" stroke-width="1" stroke-dasharray="1 1"/><g transform="translate(1773.5,63.4)"><rect x="-10.3" y="-10.0" width="20.6" height="20" rx="2" fill="url(#gwin)" stroke="#858585" stroke-width="1.1"/><path d="M-9.5,-6.8 v-1.4 q0,-1.2 1.2,-1.2 h16.6 q1.2,0 1.2,1.2 v1.4 z" fill="#8dc63f"/><rect x="-9.3" y="-9.2" width="3.6" height="1.9" fill="#f5e61c"/><rect x="0" y="-4.2" width="7.6" height="4.4" fill="#fff" stroke="#b0b0b0" stroke-width=".6"/><rect x="0" y="-4.2" width="7.6" height="1.5" fill="#8a4aa8"/><rect x="0" y="2.6" width="7.6" height="4.4" fill="#fff" stroke="#b0b0b0" stroke-width=".6"/><rect x="0" y="2.6" width="7.6" height="1.5" fill="#8a4aa8"/></g><path d="M1790.6,61.1 h5.8 l-2.9,3 z" fill="#111"/><path d="M3.5,92 V115" stroke="#8a8a8a" stroke-width="1" stroke-dasharray="1 1"/><path d="M5.5,92 V115" stroke="#8a8a8a" stroke-width="1" stroke-dasharray="1 1"/><g transform="translate(26.5,103.0)"><path d="M-12,-6 q0,-1.6 1.6,-1.6 h5.4 l2,2 h9 q1.4,0 1.4,1.4 v11.6 h-19.4 z" fill="#e9b526" stroke="#c48f12" stroke-width=".9" stroke-linejoin="round"/><path d="M-11.6,8.6 l2.4,-11.6 q.2,-1 1.2,-1 h19.4 q1.2,0 1,1.2 l-2.4,10.4 q-.2,1 -1.2,1 z" fill="url(#gfold)" stroke="#c9961a" stroke-width=".9" stroke-linejoin="round"/></g><g transform="translate(62.5,103.0)"><rect x="-6" y="-10.6" width="12" height="7" fill="url(#pgw)" stroke="#5fa7d8" stroke-width="1"/><path d="M-10.4,-3.8 q0,-1.4 1.4,-1.4 h18 q1.4,0 1.4,1.4 v8.6 h-20.8 z" fill="url(#gprn)" stroke="#5b6065" stroke-width=".8"/><rect x="-8" y="-1.4" width="16" height="2" fill="#55595e"/><rect x="-6.4" y="1.6" width="12.8" height="9.4" fill="url(#pgw)" stroke="#5fa7d8" stroke-width="1"/><path d="M-3.8,4.4 h7.6 M-3.8,6.4 h7.6 M-3.8,8.4 h7.6" stroke="#9a9a9a" stroke-width=".8"/></g><path d="M84.5,90 V116" stroke="#bdbdbd" stroke-width="1"/><path d="M85.5,90 V116" stroke="#f4f4f4" stroke-width="1"/><g transform="translate(108.0,103.0)"><circle cx="-2.6" cy="-1.4" r="10" fill="url(#gpfl)" stroke="#7a3e9a" stroke-width=".8"/><path d="M-10.6,-2.6 Q-6,-10.6 -2.6,-6 Q1,-10.6 5.6,-4.6" fill="none" stroke="#d9c2e8" stroke-width="1.2" opacity=".7"/><path d="M-8.2,-0.6 L-5.6,-3 L-3.2,0.4 L2.2,-5 L4.4,-2.6 L-3.2,5 Z" fill="#fff"/><rect x="1" y="2.4" width="12" height="10.4" rx="1" fill="url(#pgw)" stroke="#8a8a8a" stroke-width=".9"/><path d="M4.8,4.6 L10,7.6 L4.8,10.6 Z" fill="#8a3ab0"/></g><g transform="translate(144.5,103.0)"><path d="M-8,-6 l2.4,-3.4 h8.6 v6 h-11 z" fill="#f4f4f4" stroke="#9a9a9a" stroke-width=".5"/><rect x="-3.8" y="-9.4" width="6" height="2.2" fill="#8dc63f"/><path d="M-6.2,-3 l2.4,-3.4 h8.6 v6 h-11 z" fill="#f4f4f4" stroke="#9a9a9a" stroke-width=".5"/><rect x="-1.9999999999999998" y="-6.4" width="6" height="2.2" fill="#8dc63f"/><path d="M-4.4,0 l2.4,-3.4 h8.6 v6 h-11 z" fill="#f4f4f4" stroke="#9a9a9a" stroke-width=".5"/><rect x="-0.19999999999999973" y="-3.4000000000000004" width="6" height="2.2" fill="#8dc63f"/><path d="M-9.4,2.2 h17.6 l-1.4,9 h-15 z" fill="url(#gorg)" stroke="#4a4a4a" stroke-width=".7"/></g><path d="M167.5,90 V116" stroke="#bdbdbd" stroke-width="1"/><path d="M168.5,90 V116" stroke="#f4f4f4" stroke-width="1"/><g transform="translate(190.0,102.5)"><path d="M-9.6,-9.8 h16.4 l2.8,2.8 v16.6 h-19.2 z" fill="#dadada" stroke="#bdbdbd" stroke-width="1" stroke-linejoin="round"/><rect x="-3.6" y="-9.6" width="9" height="5.4" fill="#e9e9e9" stroke="#bdbdbd" stroke-width=".7"/><rect x="2.2" y="-8.6" width="1.8" height="3.2" fill="#bdbdbd"/><path d="M-7.4,-9.8 v19" stroke="#bdbdbd" stroke-width=".8"/><path d="M-5,3.4 q2.6,-3.6 5,-1 q2.6,2.6 5.4,-1" fill="none" stroke="#ededed" stroke-width="2.6"/></g><g transform="translate(228.6,103.0)"><path d="M-9.6,-9.8 h16.4 l2.8,2.8 v16.6 h-19.2 z" fill="#dadada" stroke="#bdbdbd" stroke-width="1" stroke-linejoin="round"/><rect x="-3.6" y="-9.6" width="9" height="5.4" fill="#e9e9e9" stroke="#bdbdbd" stroke-width=".7"/><rect x="2.2" y="-8.6" width="1.8" height="3.2" fill="#bdbdbd"/><path d="M-7.4,-9.8 v19" stroke="#bdbdbd" stroke-width=".8"/><rect x="-4.6" y="1" width="10.6" height="8" fill="#e9e9e9" stroke="#bdbdbd" stroke-width=".7"/><path d="M-2.8,3.4 h7 M-2.8,5.2 h7 M-2.8,7 h7" stroke="#bdbdbd" stroke-width=".7"/></g><g transform="translate(264.4,102.6)"><rect x="-12" y="-8" width="24.4" height="16.4" fill="url(#gmail)" stroke="#4a8fd0" stroke-width="1.2"/><rect x="6.6" y="-6" width="3.8" height="3.8" fill="#3f7fc4"/><path d="M-9.4,-5.2 h5.6 M-9.4,-3 h4.4 M-3.4,0 h6.6 M-3.4,2.2 h4.6 M-3.4,4.4 h7.6" stroke="#a8a8a8" stroke-width=".8" fill="none"/></g><g transform="translate(300.4,103.0)"><circle cx="3.2" cy="-1.6" r="9.2" fill="url(#gglobe)" stroke="#2d62a8" stroke-width=".6"/><path d="M-1.6,-8.4 q3,-1.6 5,0.6 q-1.6,2.6 -4.4,2.4 q-2.2,1.6 -3.6,0 z M6,-3.6 q3,-0.6 4.6,2 q-0.6,3.6 -3,5 q-2.4,-2.4 -1.6,-7 z" fill="#a6cdf0" opacity=".8"/><path d="M-5.2,-3.2 L1.6,3.6 H-2 V10.4 H-8.4 V3.6 H-12 Z" fill="url(#ggr2)" stroke="#0f6e0a" stroke-width="1" stroke-linejoin="round"/></g><path d="M323.5,92 V115" stroke="#8a8a8a" stroke-width="1" stroke-dasharray="1 1"/><path d="M325.5,92 V115" stroke="#8a8a8a" stroke-width="1" stroke-dasharray="1 1"/><g transform="translate(344.3,103.4)"><path d="M0,-9.4 L9.2,0.2 H4 V8.4 H-4 V0.2 H-9.2 Z" fill="#c6c6c6" stroke="#b4b4b4" stroke-width=".9" stroke-linejoin="round"/></g><g transform="translate(374.5,103.6)"><g transform="scale(1,-1)"><path d="M0,-9.4 L9.2,0.2 H4 V8.4 H-4 V0.2 H-9.2 Z" fill="url(#gblu)" stroke="#2c6db4" stroke-width=".9" stroke-linejoin="round"/></g></g><rect x="393.5" y="91.5" width="27.5" height="23" fill="#f6f6f6" stroke="#858585" stroke-width="1"/><path d="M460.5,92 V115" stroke="#8a8a8a" stroke-width="1" stroke-dasharray="1 1"/><path d="M462.5,92 V115" stroke="#8a8a8a" stroke-width="1" stroke-dasharray="1 1"/><rect x="467.5" y="87.5" width="32" height="30.5" rx="2.5" fill="url(#gpress)" stroke="#c3c3c3" stroke-width="1"/><g transform="translate(483.0,102.8)"><path d="M-6.6,-7.2 h5 M-6.6,6.2 h5 M-4.1,-7.2 V6.2" stroke="#111" stroke-width="1.5"/><path d="M1.6,-8.6 V6.2 L4.8,3.2 L7.4,9 L9.4,8 L6.8,2.4 H11 Z" fill="#3a3a3a" stroke="#111" stroke-width=".6" stroke-linejoin="round"/></g><g transform="translate(519.0,102.5)"><path d="M-3.6,9.6 Q-6.4,6 -9.6,1.4 Q-10.6,-0.6 -9,-1.2 Q-7.6,-1.6 -6.4,0.4 L-4.4,3 L-5.8,-6 Q-6,-8 -4.6,-8.2 Q-3.2,-8.4 -2.8,-6.4 L-1.6,-0.8 L-1.4,-8.4 Q-1.2,-10.2 0.2,-10.2 Q1.6,-10.2 1.8,-8.4 L2,-0.8 L3.6,-7.4 Q4,-9 5.4,-8.8 Q6.8,-8.4 6.4,-6.6 L5.2,0.6 L7.4,-3.2 Q8.4,-4.6 9.4,-4 Q10.4,-3.2 9.6,-1.6 Q7.4,3.4 5.6,9.6 Z" fill="#fff" stroke="#5a5a5a" stroke-width="1" stroke-linejoin="round"/></g><g transform="translate(556.0,103.0)"><path d="M1.4,1.2 L9.6,9.4" stroke="#6e6e6e" stroke-width="3" stroke-linecap="round"/><path d="M2,1.6 L9,8.6" stroke="#cfcfcf" stroke-width="1"/><circle cx="-3.4" cy="-3" r="7" fill="url(#gzl)" stroke="#4a90cc" stroke-width="1.4"/><rect x="-2.6" y="-9" width="11" height="6.4" fill="none" stroke="#333" stroke-width="1.2" stroke-dasharray="3.2 1.8"/></g><path d="M577.5,90 V116" stroke="#bdbdbd" stroke-width="1"/><path d="M578.5,90 V116" stroke="#f4f4f4" stroke-width="1"/><g transform="translate(595.0,102.0)"><circle cx="0" cy="0" r="7.4" fill="#dfe9f3" stroke="#b9c9da" stroke-width=".8"/><circle cx="0" cy="0" r="6" fill="url(#gzb)" stroke="#3d84c6" stroke-width=".8"/><rect x="-3.2" y="-1" width="6.4" height="2" fill="#1f5fa8"/></g><g transform="translate(620.0,102.0)"><circle cx="0" cy="0" r="7.4" fill="#dfe9f3" stroke="#b9c9da" stroke-width=".8"/><circle cx="0" cy="0" r="6" fill="url(#gzb)" stroke="#3d84c6" stroke-width=".8"/><rect x="-3.2" y="-1" width="6.4" height="2" fill="#1f5fa8"/><rect x="-1" y="-3.2" width="2" height="6.4" fill="#1f5fa8"/></g><rect x="637.5" y="91.5" width="45.5" height="23" fill="#f6f6f6" stroke="#858585" stroke-width="1"/><path d="M684.6,101.9 h5.8 l-2.9,3 z" fill="#111"/><path d="M701.5,92 V115" stroke="#8a8a8a" stroke-width="1" stroke-dasharray="1 1"/><path d="M703.5,92 V115" stroke="#8a8a8a" stroke-width="1" stroke-dasharray="1 1"/><g transform="translate(724.3,103.0)"><rect x="-7.4" y="-10" width="14.8" height="8.4" fill="url(#gfit)" stroke="#5aa4dc" stroke-width="1.2"/><rect x="-7.4" y="0.4" width="14.8" height="9" fill="url(#gfit)" stroke="#2f7cc0" stroke-width="1.2"/><path d="M-5.4,5 h4 M-5.4,5 l2,-2 M-5.4,5 l2,2 M5.4,5 h-4 M5.4,5 l-2,-2 M5.4,5 l-2,2" stroke="#2f7cc0" stroke-width="1.2" fill="none"/></g><g transform="translate(760.5,103.0)"><rect x="-7.4" y="-9.6" width="14.8" height="18.6" fill="url(#gfit)" stroke="#2f7cc0" stroke-width="1.3"/><path d="M0,-3.3999999999999995 V-7.6 M-1.9,-5.6 L0,-7.6 L1.9,-5.6" transform="rotate(0)" stroke="#2f7cc0" stroke-width="1.1" fill="none"/><path d="M0,-1.5999999999999996 V-5.8 M-1.9,-3.8 L0,-5.8 L1.9,-3.8" transform="rotate(90)" stroke="#2f7cc0" stroke-width="1.1" fill="none"/><path d="M0,-3.3999999999999995 V-7.6 M-1.9,-5.6 L0,-7.6 L1.9,-5.6" transform="rotate(180)" stroke="#2f7cc0" stroke-width="1.1" fill="none"/><path d="M0,-1.5999999999999996 V-5.8 M-1.9,-3.8 L0,-5.8 L1.9,-3.8" transform="rotate(270)" stroke="#2f7cc0" stroke-width="1.1" fill="none"/></g><path d="M783.5,92 V115" stroke="#8a8a8a" stroke-width="1" stroke-dasharray="1 1"/><path d="M785.5,92 V115" stroke="#8a8a8a" stroke-width="1" stroke-dasharray="1 1"/><rect x="790.5" y="91.5" width="116.5" height="23" fill="#f6f6f6" stroke="#858585" stroke-width="1"/><path d="M908.6,101.9 h5.8 l-2.9,3 z" fill="#111"/></svg>
<span class="t" id="c14" style="left:403.60px;top:94.67px;font-size:12.5px;color:#111;">1</span><span class="t" id="c15" style="left:426.40px;top:94.67px;font-size:12.5px;color:#111;">/ 4</span><span class="t" id="c16" style="left:645.80px;top:94.67px;font-size:12.5px;color:#111;">88.9%</span><span class="t" id="c17" style="left:795.40px;top:96.18px;font-size:13px;color:#7d7d7d;">חפש</span>
<div class="abs" style="left:40px;top:123px;width:1px;height:917px;background:#161616"></div><div class="abs" style="left:41px;top:123px;width:1px;height:917px;background:#4d4d4d"></div><svg class="abs" style="left:0;top:122px" width="40" height="918" viewBox="0 122 40 918"><defs><linearGradient id="lpg" x1="0" y1="0" x2="1" y2="1"><stop offset="0" stop-color="#e4e4e4"/><stop offset="1" stop-color="#b4b4b4"/></linearGradient><linearGradient id="lpb" x1="0" y1="0" x2="1" y2="1"><stop offset="0" stop-color="#c4d4e4"/><stop offset="1" stop-color="#9ab0c8"/></linearGradient></defs><path d="M10.5,141.5 h10 v16 h-10 z" fill="#bdbdbd" stroke="#8a8a8a" stroke-width=".8"/><path d="M12.5,137.5 h10.5 l4.5,4.5 v13.5 h-15 z" fill="url(#lpg)" stroke="#8a8a8a" stroke-width=".8"/><path d="M23,137.5 v4.5 h4.5" fill="#efefef" stroke="#8a8a8a" stroke-width=".6"/><path d="M15,144.5 h10 M15,146.7 h10 M15,148.9 h10 M15,151.1 h10 M15,153.3 h10" stroke="#9a9a9a" stroke-width=".7"/><path d="M10.5,184.5 h12 l5,5 v13 h-17 z" fill="url(#lpb)" stroke="#7f97b0" stroke-width=".8"/><path d="M22.5,184.5 v5 h5" fill="#dde6f0" stroke="#7f97b0" stroke-width=".6"/><path d="M19.5,192.5 h6 M19.5,194.7 h6 M19.5,196.9 h6 M13,199.1 h12.5" stroke="#7f97b0" stroke-width=".7"/><path d="M12,180.5 h6.6 v15 l-3.3,-3.4 l-3.3,3.4 z" fill="#3f7fae" stroke="#2a5f88" stroke-width=".8"/><rect x="7.5" y="228.5" width="21" height="11.5" fill="url(#lpg)" stroke="#8a8a8a" stroke-width=".8"/><path d="M10.5,236 q2,-5 3,-1 q1.5,3 3,-1 q2,-3 3.5,0.6 l4,-1" fill="none" stroke="#444" stroke-width=".9"/><path d="M9,245 L29.6,225.4" stroke="#5a5a5a" stroke-width="3.4" stroke-linecap="round"/><path d="M10.6,243.2 L27.6,227" stroke="#4a8fcc" stroke-width="2.6"/><path d="M8.6,245.4 L11,243" stroke="#ddd" stroke-width="1.6"/><path d="M19,236 L20.6,234.4" stroke="#ddd" stroke-width="3"/><path d="M9.5,965.5 h10 q2,0 2,2 v4 q0,2 -2,2 h-5 l-2.6,3.6 v-3.6 h-2.4 q-2,0 -2,-2 v-4 q0,-2 2,-2 z" fill="#d99a1c" stroke="#a86f0c" stroke-width=".8"/><path d="M18,969.5 h10 q2,0 2,2 v4.4 q0,2 -2,2 h-5 l-2.8,4 v-4 h-2.2 q-2,0 -2,-2 v-4.4 q0,-2 2,-2 z" fill="#e9ae28" stroke="#a86f0c" stroke-width=".8"/><path d="M19.4,973 h7.4 M19.4,975.4 h7.4" stroke="#8a5a08" stroke-width=".9"/><path d="M10.6,968.6 h6" stroke="#8a5a08" stroke-width=".8"/><path d="M22.4,1014.2 L15,1021.4 Q13.4,1022.8 14.6,1019.8 L25,1009.6 Q28.4,1006.4 27.6,1010.6 Q27.4,1012.4 25.6,1014.2 L15.8,1023.8 Q11.4,1027.8 9.8,1024.2 Q8.6,1021.6 12,1018 L21.4,1008.8" fill="none" stroke="#b0b0b0" stroke-width="1.7" stroke-linecap="round" stroke-linejoin="round"/></svg>
<div class="abs" style="left:1902px;top:123px;width:1px;height:917px;background:#1b1b1b"></div><div class="abs" style="left:1903px;top:123px;width:17px;height:917px;background:#f0f0f0"></div><div class="abs" style="left:1903px;top:123px;width:1px;height:917px;background:#fff"></div><div class="abs" style="left:1903px;top:123px;width:17px;height:7px;background:#e6e6e6;border:1px solid #fff;border-right-color:#bdbdbd;border-bottom-color:#bdbdbd"></div><div class="abs" style="left:1904px;top:148px;width:15px;height:219px;background:#cdcdcd"></div><svg class="abs" style="left:1903px;top:130px" width="17" height="18" viewBox="0 0 17 18"><path d="M5,11 L8.5,7.4 L12,11" fill="none" stroke="#505050" stroke-width="1.7"/></svg><svg class="abs" style="left:1903px;top:1022px" width="17" height="18" viewBox="0 0 17 18"><path d="M5,7.4 L8.5,11 L12,7.4" fill="none" stroke="#505050" stroke-width="1.7"/></svg>
<div id="taskbar"></div><div class="abs" style="left:4px;top:1040px;width:1px;height:40px;background:#4a4c50"></div><div class="abs" style="left:945px;top:1040px;width:40px;height:40px;background:#0c0f14"></div><div class="abs" style="left:945px;top:1078px;width:40px;height:2px;background:#a9d9f2"></div><span class="t" id="c18" style="left:74.90px;top:1043.76px;font-size:12px;color:#fff;">00:41</span><span class="t" id="c19" style="left:59.00px;top:1061.56px;font-size:12px;color:#fff;">07/02/2017</span><span class="t" id="c20" style="left:247.50px;top:1051.36px;font-size:12px;color:#fff;">HE</span><svg class="abs" style="left:0;top:1040px" width="1920" height="40" viewBox="0 1040 1920 40"><defs><linearGradient id="tps" x1="0" y1="0" x2="0" y2="1"><stop offset="0" stop-color="#2a8fe0"/><stop offset="1" stop-color="#0b4f98"/></linearGradient><linearGradient id="tai" x1="0" y1="0" x2="0" y2="1"><stop offset="0" stop-color="#f9a21c"/><stop offset="1" stop-color="#c46a04"/></linearGradient><linearGradient id="tac" x1="0" y1="0" x2="1" y2="1"><stop offset="0" stop-color="#fff"/><stop offset="1" stop-color="#cfcfcf"/></linearGradient></defs><path d="M25,1052 h16.2 v13 h-6 l-3.4,3.6 v-3.6 h-6.8 z" fill="#fff"/><path d="M28,1055.5 h10 M28,1058 h10 M28,1060.5 h7" stroke="#0a0c10" stroke-width="1"/><circle cx="25.5" cy="1067.2" r="7.6" fill="#1c1e22" stroke="#9a9a9a" stroke-width=".9"/><text x="25.5" y="1071.4" font-family="Liberation Sans,sans-serif" font-size="11.5" font-weight="bold" fill="#fff" text-anchor="middle">2</text><path d="M127,1057.4 h3 l4,-3.8 v12.8 l-4,-3.8 h-3 z" fill="none" stroke="#fff" stroke-width="1.1" stroke-linejoin="round"/><path d="M136.6,1056.6 q2,3.4 0,6.8 M139.2,1054.6 q3.2,5.4 0,10.8 M141.8,1052.8 q4.4,7.2 0,14.4" fill="none" stroke="#fff" stroke-width="1"/><path d="M153.6,1062 a13,13 0 0 1 13,-8.6 M155.8,1064 a10,10 0 0 1 10.6,-7.4 M158.2,1065.6 a7,7 0 0 1 8,-5.6" fill="none" stroke="#fff" stroke-width="1.2"/><circle cx="164.6" cy="1066.4" r="1.7" fill="#fff"/><rect x="178.5" y="1055.5" width="11.5" height="8" fill="none" stroke="#fff" stroke-width="1.1"/><rect x="180.4" y="1057.4" width="7.8" height="4.2" fill="#fff"/><rect x="190.4" y="1057.6" width="1.6" height="3.8" fill="#fff"/><path d="M174.6,1053.6 v3 M177,1053.6 v3 M173.6,1056.6 h4.4 v2 q0,1.6 -2.2,1.6 q-2.2,0 -2.2,-1.6 z M175.8,1060 v3.6 q0,1.6 2.4,1.6" fill="none" stroke="#fff" stroke-width="1"/><path d="M201,1063.6 L207,1057.6 L213,1063.6" fill="none" stroke="#fff" stroke-width="1.2"/><rect x="225.5" y="1054.5" width="15" height="9.5" rx="1" fill="none" stroke="#d8d8d8" stroke-width="1"/><path d="M227.4,1057 h11.2 M227.4,1059.2 h11.2 M229,1061.6 h8" stroke="#d8d8d8" stroke-width="1" stroke-dasharray="1.4 .9"/><path d="M232,1054 q0.6,-2.6 3.4,-2.4 q2.6,0 3.2,-1.6" fill="none" stroke="#d8d8d8" stroke-width=".9"/><rect x="954" y="1048.8" width="21.4" height="19.2" fill="url(#tac)"/><path d="M957.6,1064.6 Q963.6,1059.4 964.2,1052.6 Q964.4,1050.6 965.4,1052.6 Q966.6,1058.6 972.6,1062.2 Q965.6,1061 957.6,1064.6 Z" fill="none" stroke="#d1281f" stroke-width="1.3"/><rect x="1002" y="1047.8" width="24" height="24.2" fill="#00aff0"/><circle cx="1014" cy="1060" r="8.4" fill="#fff"/><circle cx="1008.4" cy="1054.2" r="4.6" fill="#fff"/><circle cx="1019.6" cy="1065.8" r="4.6" fill="#fff"/><text x="1014" y="1065.6" font-family="Liberation Sans,sans-serif" font-size="15.5" font-weight="bold" fill="#00aff0" text-anchor="middle">S</text><circle cx="1062.8" cy="1059.8" r="11" fill="#db4437"/><path d="M1062.8,1059.8 L1053.3,1054.3 A11,11 0 0 0 1059.6,1070.3 Z" fill="#0f9d58"/><path d="M1062.8,1059.8 L1059.6,1070.3 A11,11 0 0 0 1072.3,1054.3 L1062.8,1054.3 Z" fill="#ffcd40"/><path d="M1053.3,1054.3 A11,11 0 0 1 1072.3,1054.3 L1062.8,1054.3 Z" fill="#db4437"/><path d="M1062.8,1059.8 L1053.3,1054.3 A11,11 0 0 0 1058.4,1069.9 Z" fill="#0f9d58"/><circle cx="1062.8" cy="1059.8" r="5" fill="#fff"/><circle cx="1062.8" cy="1059.8" r="4" fill="#4285f4"/><rect x="1110" y="1053.4" width="13" height="12.4" fill="#fff" stroke="#0072c6" stroke-width="1"/><path d="M1110.4,1054 l6.2,5.2 l6.2,-5.2" fill="none" stroke="#0072c6" stroke-width="1.2"/><path d="M1100,1050.4 l13.4,-2.4 v23.6 l-13.4,-2.4 z" fill="#0072c6"/><text x="1106.8" y="1064.4" font-family="Liberation Sans,sans-serif" font-size="11.5" font-weight="bold" fill="#fff" text-anchor="middle">O</text><rect x="1160" y="1051.4" width="12" height="17.4" fill="#fff" stroke="#2b579a" stroke-width="1"/><path d="M1162,1054.4 h8.6 M1162,1056.8 h8.6 M1162,1059.2 h8.6 M1162,1061.6 h8.6 M1162,1064 h8.6 M1162,1066.4 h8.6" stroke="#2b579a" stroke-width=".9"/><path d="M1149.8,1050.4 l13.2,-2.4 v23.6 l-13.2,-2.4 z" fill="#2b579a"/><text x="1156.4" y="1064.2" font-family="Liberation Sans,sans-serif" font-size="10.5" font-weight="bold" fill="#fff" text-anchor="middle">W</text><rect x="1199.8" y="1049.4" width="20.4" height="19.2" fill="#2e0a1c" stroke="#ff3f94" stroke-width="1.3"/><text x="1210.0" y="1064" font-family="Liberation Sans,sans-serif" font-size="13" font-weight="bold" fill="#ff3f94" text-anchor="middle">Id</text><rect x="1298.0" y="1049.4" width="20.4" height="19.2" fill="#2e0a1c" stroke="#ff3f94" stroke-width="1.3"/><text x="1308.2" y="1064" font-family="Liberation Sans,sans-serif" font-size="13" font-weight="bold" fill="#ff3f94" text-anchor="middle">Id</text><rect x="1247" y="1048.4" width="23" height="23" fill="#00d2ff" stroke="#0a2ac0" stroke-width="1"/><path d="M1250,1052 l3,-2.4 l3,2 l3,-2 l3,2 l3,-2 l3,2.4" fill="none" stroke="#f0e000" stroke-width="1.6"/><path d="M1248,1069 q5,-3 10.4,0 q5.4,-3 10.4,0 v2 h-20.8 z" fill="#f4f4f4" stroke="#222" stroke-width=".5"/><text x="1258.6" y="1066.4" font-family="Liberation Sans,sans-serif" font-size="15" font-weight="bold" fill="#0a2ac0" text-anchor="middle">תג</text><rect x="1346.2" y="1048.8" width="21.2" height="20" rx="1" fill="url(#tps)"/><rect x="1346.2" y="1048.8" width="21.2" height="2" fill="#0a3f7c" opacity=".5"/><text x="1356.8" y="1064" font-family="Liberation Sans,sans-serif" font-size="12.5" font-weight="bold" fill="#9fdcff" text-anchor="middle">Ps</text><rect x="1394.8" y="1048.8" width="21.6" height="20" rx="1" fill="url(#tai)"/><text x="1405.6" y="1064" font-family="Liberation Sans,sans-serif" font-size="12.5" font-weight="bold" fill="#ffe9a8" text-anchor="middle">Ai</text><rect x="1444.9" y="1049.4" width="20.2" height="19.2" fill="#0a1628" stroke="#2bc4ff" stroke-width="1.3"/><text x="1455" y="1064" font-family="Liberation Sans,sans-serif" font-size="12.5" font-weight="bold" fill="#2bc4ff" text-anchor="middle">Ps</text><path d="M1493.6,1053 v12.4 h9.6" fill="none" stroke="#e01010" stroke-width="1.2"/><path d="M1515,1053 v12.4 h-9.6" fill="none" stroke="#e01010" stroke-width="1.2"/><path d="M1495,1051.6 q4.6,-1.6 9.2,1 q4.6,-2.6 9.2,-1 v12.6 q-4.6,-1.4 -9.2,1 q-4.6,-2.4 -9.2,-1 z" fill="#f4f6ff" stroke="#8a8ac8" stroke-width=".7"/><path d="M1496.6,1054.4 h6 M1496.6,1056.6 h6 M1496.6,1058.8 h6 M1506,1054.4 h6 M1506,1056.6 h6 M1506,1058.8 h6" stroke="#6a78d0" stroke-width=".8"/><circle cx="1504.6" cy="1060.4" r="3.8" fill="#d8f0ff" stroke="#444" stroke-width="1"/><path d="M1507.6,1063.2 l7,6.6" stroke="#1030e0" stroke-width="2.2"/><circle cx="1552.4" cy="1061.6" r="9" fill="#8cc4ec" stroke="#3a78b4" stroke-width="1.6"/><circle cx="1552.4" cy="1061.6" r="3.2" fill="#06080c"/><rect x="1543.4" y="1049" width="6" height="3" rx="1.5" fill="#f0f0f0"/><rect x="1558.4" y="1049" width="6" height="3" rx="1.5" fill="#f0f0f0"/><path d="M1553,1047.6 h6.6 l-4,6.4 h4.4 l-8.8,9.6 l3,-7.4 h-4 z" fill="#ffe11c" stroke="#a08000" stroke-width=".6"/><path d="M1559.6,1068.6 l4.6,4" stroke="#9a8a7a" stroke-width="2.2"/><path d="M1590,1062.4 q1,-8.4 10.4,-9.6 q8.6,-0.6 9.6,5 q0.6,4.6 -4,4.6 q-3.4,-0.4 -3.4,2.4 q1.4,4 -3.6,4.4 q-8.4,0 -9,-6.8 z" fill="#dfe6f0" stroke="#8a94a8" stroke-width=".8"/><circle cx="1595.4" cy="1060" r="1.8" fill="#e02a20"/><circle cx="1599.4" cy="1056.4" r="1.8" fill="#30a030"/><circle cx="1604.4" cy="1055.8" r="1.8" fill="#f0b010"/><circle cx="1595.6" cy="1065" r="1.6" fill="#2060d0"/><path d="M1612.6,1048.6 L1603.6,1069.6" stroke="#d88a3a" stroke-width="2"/><path d="M1613.4,1047.4 L1611.2,1052.4" stroke="#b0b0b0" stroke-width="2.8"/><path d="M1641,1053.6 l19.8,-2.4 v20.4 l-19.8,-2.8 z" fill="#fff"/><path d="M1646.6,1052.6 q0.6,-5 4,-4.6 q3.2,0.4 3.6,4" fill="none" stroke="#fff" stroke-width="1.2"/><path d="M1644.6,1057 l5,-.5 v4.6 h-5 z M1650.8,1056.4 l6,-.6 v5.3 h-6 z M1644.6,1062.2 h5 v4.8 l-5,-.6 z M1650.8,1062.2 h6 v5.6 l-6,-.7 z" fill="#06080c"/><path d="M1689.4,1052.6 q0,-1.4 1.4,-1.4 h6 l1.6,1.8 h11 q1.2,0 1.2,1.2 v14 h-21.2 z" fill="#ffd766"/><rect x="1690.8" y="1051.8" width="5.4" height="1.4" fill="#fff3c4"/><path d="M1689.4,1056.2 h21.2 v12 h-21.2 z" fill="#ffe08a"/><path d="M1693.4,1068.8 v-6.4 q0,-1.2 1.2,-1.2 h10.8 q1.2,0 1.2,1.2 v6.4 h-3.8 v-4 h-5.6 v4 z" fill="#3aa8e8"/><path d="M1739.6,1059.6 q1,-9.8 10,-10.2 q9.4,0.2 9.6,10.4 v2 h-13.4 q0.6,4.4 5.6,4.6 q3.6,0 6.6,-1.6 v4.4 q-3.4,1.8 -7.6,1.6 q-8.6,-0.6 -9.4,-8.6 q0.2,-4.6 4.4,-7.2 q-3.4,0.6 -5.800,4.6 z M1745.8,1058 h7.400 q-0.200,-4 -3.600,-4.200 q-3.200,0.200 -3.800,4.200 z" fill="#0f7ad8" fill-rule="evenodd"/><rect x="1794.5" y="1053.8" width="11.4" height="12.4" fill="none" stroke="#fff" stroke-width="1.3"/><path d="M1792.6,1055.4 h-2 v9.2 h2 M1807.8,1055.4 h2 v9.2 h-2" fill="none" stroke="#fff" stroke-width="1.2"/><circle cx="1850.8" cy="1057.2" r="5" fill="none" stroke="#fff" stroke-width="1.3"/><path d="M1847.2,1060.8 L1840.4,1067.8" stroke="#fff" stroke-width="1.4"/><path d="M1887.6,1054 l7,-1 v6.600 h-7 z M1895.600,1052.800 l8.400,-1.200 v8 h-8.400 z M1887.600,1060.600 h7 v6.600 l-7,-1 z M1895.600,1060.600 h8.400 v8 l-8.400,-1.200 z" fill="#fff"/></svg>
<div id="page"><svg width="643" height="909" viewBox="0 0 643 909" style="position:absolute;left:0;top:0"><defs>
<linearGradient id="gTop" x1="0" x2="1" y1="0" y2="0"><stop offset="0" stop-color="#36496b"/><stop offset=".3" stop-color="#435c81"/><stop offset=".6" stop-color="#3f577c"/><stop offset="1" stop-color="#35486a"/></linearGradient>
<linearGradient id="gBot" x1="0" x2="1" y1="0" y2="0"><stop offset="0" stop-color="#3f577e"/><stop offset=".35" stop-color="#4a668f"/><stop offset=".7" stop-color="#425d85"/><stop offset="1" stop-color="#384f75"/></linearGradient>
<linearGradient id="gBotV" x1="0" x2="0" y1="0" y2="1"><stop offset="0" stop-color="#000" stop-opacity="0"/><stop offset="1" stop-color="#0a1830" stop-opacity=".18"/></linearGradient>
<linearGradient id="gMid" x1="0" x2="1" y1="0" y2="0"><stop offset="0" stop-color="#a1a5bb"/><stop offset=".5" stop-color="#a9adc3"/><stop offset="1" stop-color="#a4a8be"/></linearGradient>
<linearGradient id="sh1" x1="0" x2="0" y1="0" y2="1"><stop offset="0" stop-color="#2c3144" stop-opacity=".95"/><stop offset=".45" stop-color="#3a3f55" stop-opacity=".6"/><stop offset="1" stop-color="#3a3f55" stop-opacity="0"/></linearGradient>
<linearGradient id="sh2" x1="0" x2="0" y1="1" y2="0"><stop offset="0" stop-color="#2c3144" stop-opacity=".95"/><stop offset=".45" stop-color="#3a3f55" stop-opacity=".6"/><stop offset="1" stop-color="#3a3f55" stop-opacity="0"/></linearGradient>
<filter id="veinD" x="0" y="0" width="100%" height="100%" color-interpolation-filters="sRGB">
 <feTurbulence type="fractalNoise" baseFrequency="0.02 0.035" numOctaves="4" seed="7"/>
 <feColorMatrix type="matrix" values="0 0 0 0 0.62  0 0 0 0 0.75  0 0 0 0 0.9  1 0 0 0 0"/>
 <feComponentTransfer result="v1"><feFuncA type="table" tableValues="0 0 0 0 0 0 0 0 0 0 0 0 0 0 0 0 0 0 0 0 1 0 0 0 0 0 0 0 0 0 0 0 0 0 0 0 0 0 0 0 0"/></feComponentTransfer>
 <feTurbulence type="fractalNoise" baseFrequency="0.05 0.08" numOctaves="3" seed="23"/>
 <feColorMatrix type="matrix" values="0 0 0 0 0.62  0 0 0 0 0.75  0 0 0 0 0.9  0 1 0 0 0"/>
 <feComponentTransfer result="v2"><feFuncA type="table" tableValues="0 0 0 0 0 0 0 0 0 0 0 0 0 0 0 1 0 0 0 0 0 0 0 0 0 0 0 0 0 0 0"/></feComponentTransfer>
 <feMerge><feMergeNode in="v2"/><feMergeNode in="v1"/></feMerge>
</filter>
<filter id="veinL" x="0" y="0" width="100%" height="100%" color-interpolation-filters="sRGB">
 <feTurbulence type="fractalNoise" baseFrequency="0.02 0.035" numOctaves="4" seed="12"/>
 <feColorMatrix type="matrix" values="0 0 0 0 0.86  0 0 0 0 0.91  0 0 0 0 0.99  1 0 0 0 0"/>
 <feComponentTransfer result="v1"><feFuncA type="table" tableValues="0 0 0 0 0 0 0 0 0 0 0 0 0 0 0 0 0 0 0 0 1 0 0 0 0 0 0 0 0 0 0 0 0 0 0 0 0 0 0 0 0"/></feComponentTransfer>
 <feTurbulence type="fractalNoise" baseFrequency="0.05 0.08" numOctaves="3" seed="31"/>
 <feColorMatrix type="matrix" values="0 0 0 0 0.86  0 0 0 0 0.91  0 0 0 0 0.99  0 1 0 0 0"/>
 <feComponentTransfer result="v2"><feFuncA type="table" tableValues="0 0 0 0 0 0 0 0 0 0 0 0 0 0 0 1 0 0 0 0 0 0 0 0 0 0 0 0 0 0 0"/></feComponentTransfer>
 <feMerge><feMergeNode in="v2"/><feMergeNode in="v1"/></feMerge>
</filter>
<filter id="grain" x="0" y="0" width="100%" height="100%" color-interpolation-filters="sRGB">
 <feTurbulence type="fractalNoise" baseFrequency="0.7" numOctaves="2" seed="3"/>
 <feColorMatrix type="matrix" values="0 0 0 0 0.88  0 0 0 0 0.92  0 0 0 0 1  0 0 0 8 -4.6"/>
</filter>
<g id="orn"><g transform="translate(28.375,0)"><path d="M30.98,3.20 C24.00,-8.40 17.00,-13.90 3.60,-14.00" fill="none" stroke="#070b16" stroke-width="1.6"/><path d="M23.77,-2.20 C20.60,-6.80 15.00,-10.90 4.40,-11.30" fill="none" stroke="#070b16" stroke-width="1.3"/><path d="M2.60,-2.10 L11.30,-2.20 L12.49,-2.45 L13.56,-2.97 L14.44,-3.73 L15.10,-4.66 L15.49,-5.71 L15.61,-6.80 L15.45,-7.86 L15.05,-8.82 L14.43,-9.64 L13.65,-10.26 L12.76,-10.65 L11.82,-10.80 L10.90,-10.72 L10.05,-10.42 L9.32,-9.93 L8.76,-9.29 L8.38,-8.54 L8.21,-7.76 L8.24,-6.98 L8.46,-6.25 L8.84,-5.62 L9.35,-5.13 L9.95,-4.79 L10.59,-4.62 L11.23,-4.62 L11.82,-4.77 L12.34,-5.06 L12.75,-5.45 L13.03,-5.92 L13.18,-6.42" fill="none" stroke="#070b16" stroke-width="1.75" stroke-linecap="round" stroke-linejoin="round"/><path d="M3.00,-5.40 L5.60,-7.20 L3.60,-9.60 Z" fill="#070b16"/><path d="M14.40,-1.90 L19.60,-1.90 L17.80,-3.80 L21.40,-3.40 L19.40,-5.60 L22.60,-4.40 L24.60,-0.40" fill="none" stroke="#070b16" stroke-width="1.6" stroke-linejoin="round"/><path d="M2.80,-1.90 L14.40,-1.90" stroke="#070b16" stroke-width="1.4"/><circle cx="22.27" cy="-11.60" r="1.9" fill="none" stroke="#070b16" stroke-width="1.35"/><path d="M25.57,-14.30 Q21.98,-15.60 18.18,-12.90" fill="none" stroke="#070b16" stroke-width="1.25"/><path d="M30.98,-3.20 C24.00,8.40 17.00,13.90 3.60,14.00" fill="none" stroke="#070b16" stroke-width="1.6"/><path d="M23.77,2.20 C20.60,6.80 15.00,10.90 4.40,11.30" fill="none" stroke="#070b16" stroke-width="1.3"/><path d="M2.60,2.10 L11.30,2.20 L12.49,2.45 L13.56,2.97 L14.44,3.73 L15.10,4.66 L15.49,5.71 L15.61,6.80 L15.45,7.86 L15.05,8.82 L14.43,9.64 L13.65,10.26 L12.76,10.65 L11.82,10.80 L10.90,10.72 L10.05,10.42 L9.32,9.93 L8.76,9.29 L8.38,8.54 L8.21,7.76 L8.24,6.98 L8.46,6.25 L8.84,5.62 L9.35,5.13 L9.95,4.79 L10.59,4.62 L11.23,4.62 L11.82,4.77 L12.34,5.06 L12.75,5.45 L13.03,5.92 L13.18,6.42" fill="none" stroke="#070b16" stroke-width="1.75" stroke-linecap="round" stroke-linejoin="round"/><path d="M3.00,5.40 L5.60,7.20 L3.60,9.60 Z" fill="#070b16"/><path d="M14.40,1.90 L19.60,1.90 L17.80,3.80 L21.40,3.40 L19.40,5.60 L22.60,4.40 L24.60,0.40" fill="none" stroke="#070b16" stroke-width="1.6" stroke-linejoin="round"/><path d="M2.80,1.90 L14.40,1.90" stroke="#070b16" stroke-width="1.4"/><circle cx="22.27" cy="11.60" r="1.9" fill="none" stroke="#070b16" stroke-width="1.35"/><path d="M25.57,14.30 Q21.98,15.60 18.18,12.90" fill="none" stroke="#070b16" stroke-width="1.25"/><path d="M-30.98,3.20 C-24.00,-8.40 -17.00,-13.90 -3.60,-14.00" fill="none" stroke="#070b16" stroke-width="1.6"/><path d="M-23.77,-2.20 C-20.60,-6.80 -15.00,-10.90 -4.40,-11.30" fill="none" stroke="#070b16" stroke-width="1.3"/><path d="M-2.60,-2.10 L-11.30,-2.20 L-12.49,-2.45 L-13.56,-2.97 L-14.44,-3.73 L-15.10,-4.66 L-15.49,-5.71 L-15.61,-6.80 L-15.45,-7.86 L-15.05,-8.82 L-14.43,-9.64 L-13.65,-10.26 L-12.76,-10.65 L-11.82,-10.80 L-10.90,-10.72 L-10.05,-10.42 L-9.32,-9.93 L-8.76,-9.29 L-8.38,-8.54 L-8.21,-7.76 L-8.24,-6.98 L-8.46,-6.25 L-8.84,-5.62 L-9.35,-5.13 L-9.95,-4.79 L-10.59,-4.62 L-11.23,-4.62 L-11.82,-4.77 L-12.34,-5.06 L-12.75,-5.45 L-13.03,-5.92 L-13.18,-6.42" fill="none" stroke="#070b16" stroke-width="1.75" stroke-linecap="round" stroke-linejoin="round"/><path d="M-3.00,-5.40 L-5.60,-7.20 L-3.60,-9.60 Z" fill="#070b16"/><path d="M-14.40,-1.90 L-19.60,-1.90 L-17.80,-3.80 L-21.40,-3.40 L-19.40,-5.60 L-22.60,-4.40 L-24.60,-0.40" fill="none" stroke="#070b16" stroke-width="1.6" stroke-linejoin="round"/><path d="M-2.80,-1.90 L-14.40,-1.90" stroke="#070b16" stroke-width="1.4"/><circle cx="-22.27" cy="-11.60" r="1.9" fill="none" stroke="#070b16" stroke-width="1.35"/><path d="M-25.57,-14.30 Q-21.98,-15.60 -18.18,-12.90" fill="none" stroke="#070b16" stroke-width="1.25"/><path d="M-30.98,-3.20 C-24.00,8.40 -17.00,13.90 -3.60,14.00" fill="none" stroke="#070b16" stroke-width="1.6"/><path d="M-23.77,2.20 C-20.60,6.80 -15.00,10.90 -4.40,11.30" fill="none" stroke="#070b16" stroke-width="1.3"/><path d="M-2.60,2.10 L-11.30,2.20 L-12.49,2.45 L-13.56,2.97 L-14.44,3.73 L-15.10,4.66 L-15.49,5.71 L-15.61,6.80 L-15.45,7.86 L-15.05,8.82 L-14.43,9.64 L-13.65,10.26 L-12.76,10.65 L-11.82,10.80 L-10.90,10.72 L-10.05,10.42 L-9.32,9.93 L-8.76,9.29 L-8.38,8.54 L-8.21,7.76 L-8.24,6.98 L-8.46,6.25 L-8.84,5.62 L-9.35,5.13 L-9.95,4.79 L-10.59,4.62 L-11.23,4.62 L-11.82,4.77 L-12.34,5.06 L-12.75,5.45 L-13.03,5.92 L-13.18,6.42" fill="none" stroke="#070b16" stroke-width="1.75" stroke-linecap="round" stroke-linejoin="round"/><path d="M-3.00,5.40 L-5.60,7.20 L-3.60,9.60 Z" fill="#070b16"/><path d="M-14.40,1.90 L-19.60,1.90 L-17.80,3.80 L-21.40,3.40 L-19.40,5.60 L-22.60,4.40 L-24.60,0.40" fill="none" stroke="#070b16" stroke-width="1.6" stroke-linejoin="round"/><path d="M-2.80,1.90 L-14.40,1.90" stroke="#070b16" stroke-width="1.4"/><circle cx="-22.27" cy="11.60" r="1.9" fill="none" stroke="#070b16" stroke-width="1.35"/><path d="M-25.57,14.30 Q-21.98,15.60 -18.18,12.90" fill="none" stroke="#070b16" stroke-width="1.25"/><circle cx="0" cy="0" r="2.8" fill="#5b6b8e" stroke="#070b16" stroke-width="1.4"/><path d="M0,-3.60 L-2.6,-8.60 L-4.9,-10.60 L-2.4,-12.40 L0,-16.20 L2.4,-12.40 L4.9,-10.60 L2.6,-8.60 Z" fill="#5b6b8e" stroke="#070b16" stroke-width="1.3" stroke-linejoin="round"/><path d="M0,-5.20 V-13.80 M-2.4,-10.80 L0,-9.00 L2.4,-10.80" stroke="#070b16" stroke-width="0.85" fill="none"/><path d="M-28.38,-4.80 L-31.07,-9.80 L-28.38,-14.60 L-25.68,-9.80 Z" fill="none" stroke="#070b16" stroke-width="1.15" stroke-linejoin="round"/><path d="M-28.38,-6.20 V-13.00" stroke="#070b16" stroke-width=".8"/><path d="M28.38,-4.80 L25.68,-9.80 L28.38,-14.60 L31.07,-9.80 Z" fill="none" stroke="#070b16" stroke-width="1.15" stroke-linejoin="round"/><path d="M28.38,-6.20 V-13.00" stroke="#070b16" stroke-width=".8"/><path d="M0,3.60 L-2.6,8.60 L-4.9,10.60 L-2.4,12.40 L0,16.20 L2.4,12.40 L4.9,10.60 L2.6,8.60 Z" fill="#5b6b8e" stroke="#070b16" stroke-width="1.3" stroke-linejoin="round"/><path d="M0,5.20 V13.80 M-2.4,10.80 L0,9.00 L2.4,10.80" stroke="#070b16" stroke-width="0.85" fill="none"/><path d="M-28.38,4.80 L-31.07,9.80 L-28.38,14.60 L-25.68,9.80 Z" fill="none" stroke="#070b16" stroke-width="1.15" stroke-linejoin="round"/><path d="M-28.38,6.20 V13.00" stroke="#070b16" stroke-width=".8"/><path d="M28.38,4.80 L25.68,9.80 L28.38,14.60 L31.07,9.80 Z" fill="none" stroke="#070b16" stroke-width="1.15" stroke-linejoin="round"/><path d="M28.38,6.20 V13.00" stroke="#070b16" stroke-width=".8"/></g></g>
</defs><rect x="0" y="0" width="643" height="60" fill="url(#gTop)"/><rect x="0" y="60" width="643" height="740" fill="url(#gMid)"/><rect x="0" y="800" width="643" height="109" fill="url(#gBot)"/><rect x="0" y="800" width="643" height="109" fill="url(#gBotV)"/><rect x="0" y="0" width="643" height="60" filter="url(#veinD)" opacity=".3"/><rect x="0" y="800" width="643" height="109" filter="url(#veinD)" opacity=".3"/><rect x="0" y="60" width="643" height="740" filter="url(#veinL)" opacity=".5"/><rect x="0" y="0" width="643" height="909" filter="url(#grain)" opacity=".22"/><rect x="0" y="84" width="643" height="15" fill="url(#sh1)"/><rect x="0" y="765" width="643" height="17" fill="url(#sh2)"/><g transform="translate(0,68.6)"><rect x="0" y="-16.2" width="643" height="32.4" fill="#5b6b8e"/><ellipse cx="-31.50" cy="-15" rx="7" ry="3.4" fill="#5b6b8e"/><ellipse cx="-31.50" cy="15" rx="7" ry="3.4" fill="#5b6b8e"/><use href="#orn" x="-59.88" y="0"/><ellipse cx="25.25" cy="-15" rx="7" ry="3.4" fill="#5b6b8e"/><ellipse cx="25.25" cy="15" rx="7" ry="3.4" fill="#5b6b8e"/><use href="#orn" x="-3.12" y="0"/><ellipse cx="82.00" cy="-15" rx="7" ry="3.4" fill="#5b6b8e"/><ellipse cx="82.00" cy="15" rx="7" ry="3.4" fill="#5b6b8e"/><use href="#orn" x="53.62" y="0"/><ellipse cx="138.75" cy="-15" rx="7" ry="3.4" fill="#5b6b8e"/><ellipse cx="138.75" cy="15" rx="7" ry="3.4" fill="#5b6b8e"/><use href="#orn" x="110.38" y="0"/><ellipse cx="195.50" cy="-15" rx="7" ry="3.4" fill="#5b6b8e"/><ellipse cx="195.50" cy="15" rx="7" ry="3.4" fill="#5b6b8e"/><use href="#orn" x="167.12" y="0"/><ellipse cx="252.25" cy="-15" rx="7" ry="3.4" fill="#5b6b8e"/><ellipse cx="252.25" cy="15" rx="7" ry="3.4" fill="#5b6b8e"/><use href="#orn" x="223.88" y="0"/><ellipse cx="309.00" cy="-15" rx="7" ry="3.4" fill="#5b6b8e"/><ellipse cx="309.00" cy="15" rx="7" ry="3.4" fill="#5b6b8e"/><use href="#orn" x="280.62" y="0"/><ellipse cx="365.75" cy="-15" rx="7" ry="3.4" fill="#5b6b8e"/><ellipse cx="365.75" cy="15" rx="7" ry="3.4" fill="#5b6b8e"/><use href="#orn" x="337.38" y="0"/><ellipse cx="422.50" cy="-15" rx="7" ry="3.4" fill="#5b6b8e"/><ellipse cx="422.50" cy="15" rx="7" ry="3.4" fill="#5b6b8e"/><use href="#orn" x="394.12" y="0"/><ellipse cx="479.25" cy="-15" rx="7" ry="3.4" fill="#5b6b8e"/><ellipse cx="479.25" cy="15" rx="7" ry="3.4" fill="#5b6b8e"/><use href="#orn" x="450.88" y="0"/><ellipse cx="536.00" cy="-15" rx="7" ry="3.4" fill="#5b6b8e"/><ellipse cx="536.00" cy="15" rx="7" ry="3.4" fill="#5b6b8e"/><use href="#orn" x="507.62" y="0"/><ellipse cx="592.75" cy="-15" rx="7" ry="3.4" fill="#5b6b8e"/><ellipse cx="592.75" cy="15" rx="7" ry="3.4" fill="#5b6b8e"/><use href="#orn" x="564.38" y="0"/><ellipse cx="649.50" cy="-15" rx="7" ry="3.4" fill="#5b6b8e"/><ellipse cx="649.50" cy="15" rx="7" ry="3.4" fill="#5b6b8e"/><use href="#orn" x="621.12" y="0"/><ellipse cx="706.25" cy="-15" rx="7" ry="3.4" fill="#5b6b8e"/><ellipse cx="706.25" cy="15" rx="7" ry="3.4" fill="#5b6b8e"/><use href="#orn" x="677.88" y="0"/></g><g transform="translate(0,798.0)"><rect x="0" y="-16.2" width="643" height="32.4" fill="#5b6b8e"/><ellipse cx="-31.50" cy="-15" rx="7" ry="3.4" fill="#5b6b8e"/><ellipse cx="-31.50" cy="15" rx="7" ry="3.4" fill="#5b6b8e"/><use href="#orn" x="-59.88" y="0"/><ellipse cx="25.25" cy="-15" rx="7" ry="3.4" fill="#5b6b8e"/><ellipse cx="25.25" cy="15" rx="7" ry="3.4" fill="#5b6b8e"/><use href="#orn" x="-3.12" y="0"/><ellipse cx="82.00" cy="-15" rx="7" ry="3.4" fill="#5b6b8e"/><ellipse cx="82.00" cy="15" rx="7" ry="3.4" fill="#5b6b8e"/><use href="#orn" x="53.62" y="0"/><ellipse cx="138.75" cy="-15" rx="7" ry="3.4" fill="#5b6b8e"/><ellipse cx="138.75" cy="15" rx="7" ry="3.4" fill="#5b6b8e"/><use href="#orn" x="110.38" y="0"/><ellipse cx="195.50" cy="-15" rx="7" ry="3.4" fill="#5b6b8e"/><ellipse cx="195.50" cy="15" rx="7" ry="3.4" fill="#5b6b8e"/><use href="#orn" x="167.12" y="0"/><ellipse cx="252.25" cy="-15" rx="7" ry="3.4" fill="#5b6b8e"/><ellipse cx="252.25" cy="15" rx="7" ry="3.4" fill="#5b6b8e"/><use href="#orn" x="223.88" y="0"/><ellipse cx="309.00" cy="-15" rx="7" ry="3.4" fill="#5b6b8e"/><ellipse cx="309.00" cy="15" rx="7" ry="3.4" fill="#5b6b8e"/><use href="#orn" x="280.62" y="0"/><ellipse cx="365.75" cy="-15" rx="7" ry="3.4" fill="#5b6b8e"/><ellipse cx="365.75" cy="15" rx="7" ry="3.4" fill="#5b6b8e"/><use href="#orn" x="337.38" y="0"/><ellipse cx="422.50" cy="-15" rx="7" ry="3.4" fill="#5b6b8e"/><ellipse cx="422.50" cy="15" rx="7" ry="3.4" fill="#5b6b8e"/><use href="#orn" x="394.12" y="0"/><ellipse cx="479.25" cy="-15" rx="7" ry="3.4" fill="#5b6b8e"/><ellipse cx="479.25" cy="15" rx="7" ry="3.4" fill="#5b6b8e"/><use href="#orn" x="450.88" y="0"/><ellipse cx="536.00" cy="-15" rx="7" ry="3.4" fill="#5b6b8e"/><ellipse cx="536.00" cy="15" rx="7" ry="3.4" fill="#5b6b8e"/><use href="#orn" x="507.62" y="0"/><ellipse cx="592.75" cy="-15" rx="7" ry="3.4" fill="#5b6b8e"/><ellipse cx="592.75" cy="15" rx="7" ry="3.4" fill="#5b6b8e"/><use href="#orn" x="564.38" y="0"/><ellipse cx="649.50" cy="-15" rx="7" ry="3.4" fill="#5b6b8e"/><ellipse cx="649.50" cy="15" rx="7" ry="3.4" fill="#5b6b8e"/><use href="#orn" x="621.12" y="0"/><ellipse cx="706.25" cy="-15" rx="7" ry="3.4" fill="#5b6b8e"/><ellipse cx="706.25" cy="15" rx="7" ry="3.4" fill="#5b6b8e"/><use href="#orn" x="677.88" y="0"/></g></svg></div>
<div id="dlgc">
<div class="abs" style="left:713px;top:181px;width:494px;height:670px;background:#f0f0f0;border:1px solid #fff;box-shadow:0 0 0 1px rgba(70,80,105,.22),0 2px 9px 1px rgba(20,25,45,.38)"></div>
<div class="abs" style="left:713px;top:181px;width:494px;height:31px;background:#fff"></div>
<div class="abs" style="left:713px;top:181px;width:494px;height:1px;background:#1a86d9"></div>
<span class="t" id="t1" style="left:721.50px;top:189.97px;font-size:12.5px;color:#000;">תצוגה מקדימה של פלט</span>
<div class="abs" style="left:1187px;top:189px;width:19px;height:19px;background:#c75050;border:1px solid #c24646"></div>
<span class="t" style="left:1193.4px;top:190.3px;color:#fff;font-size:11px;font-weight:bold">x</span>
<span class="t" id="t2" style="left:728.30px;top:232.42px;font-size:12.5px;color:#000;">פרופיל הדמיה:</span>
<div class="abs" style="left:842px;top:227px;width:250px;height:24px;border:1px solid #adadad;background:#e5e5e5"></div><div class="abs" style="left:845px;top:230px;width:227px;height:18px;background:#fff"></div>
<span class="t" id="t3" style="left:847.50px;top:231.87px;font-size:12.2px;color:#000;">U.S. Web Coated (SWOP) v2</span>
<svg class="abs" style="left:1077.0px;top:236.3px" width="11" height="7" viewBox="-1 -1 11 7"><path d="M0,0 L4.5,4.5 L9,0" fill="none" stroke="#444" stroke-width="1.2"/></svg>
<div class="abs" style="left:728px;top:264px;width:13px;height:13px;border:1px solid #333;background:#fff"></div>
<span class="t" id="t4" style="left:744.40px;top:263.87px;font-size:12.5px;color:#000;">הדמיית צבע דיו שחור</span>
<div class="abs" style="left:912px;top:264px;width:13px;height:13px;border:1px solid #333;background:#fff"></div>
<span class="t" id="t5" style="left:928.10px;top:263.87px;font-size:12.5px;color:#000;">הדמיית צבע נייר</span>
<div class="abs" style="left:729px;top:291px;width:123px;height:25px;border:1px solid #adadad;background:#e1e1e1"></div>
<span class="t" id="t6" style="left:755.40px;top:296.77px;font-size:12.5px;color:#000;">מנהל צבעי דיו</span>
<div class="abs" style="left:863px;top:297px;width:13px;height:13px;border:1px solid #333;background:#fff"></div><svg class="abs" style="left:863px;top:297px" width="13" height="13" viewBox="0 0 13 13"><path d="M2.6,6.6 L5.2,9.4 L10.6,3.2" fill="none" stroke="#111" stroke-width="1.3"/></svg>
<span class="t" id="t7" style="left:879.20px;top:296.77px;font-size:12.5px;color:#000;">הדמיית הדפסת רכב</span>
<span class="t" id="t8" style="left:728.30px;top:333.37px;font-size:12.5px;color:#000;">הצג:</span>
<span class="t" id="t9" style="left:1010.30px;top:332.87px;font-size:12.5px;color:#000;">אזהרת אטימות:</span>
<div class="abs" style="left:1138px;top:329px;width:29px;height:21px;background:#fff;border:1px solid;border-color:#a0a0a0 #fff #fff #a0a0a0"></div>
<div class="abs" style="left:1139px;top:330px;width:27px;height:19px;border:1px solid;border-color:#696969 #e3e3e3 #e3e3e3 #696969"></div>
<span class="t" id="t10" style="left:1141.25px;top:332.17px;font-size:12.2px;color:#000;">100</span>
<span class="t" id="t11" style="left:1178.75px;top:333.17px;font-size:12.2px;color:#000;">%</span>
<span class="t" id="t12" style="left:728.30px;top:363.77px;font-size:12.5px;color:#000;">תצוגה מקדימה:</span>
<div class="abs" style="left:860px;top:362px;width:332px;height:60px;border:1px solid #828790;background:#fff"></div>
<div class="abs" style="left:861px;top:363px;width:330px;height:19px;background:#f0f0f0"></div>
<span class="t" id="t13" style="right:733.30px;top:366.37px;font-size:12.5px;color:#000;">הפרדות צבע</span>
<span class="t" id="t14" style="right:733.30px;top:384.17px;font-size:12.5px;color:#000;">אזהרות צבע</span>
<span class="t" id="t15" style="right:733.30px;top:402.07px;font-size:12.5px;color:#000;">מפקח העצמים</span>
<div class="abs" style="left:728px;top:439px;width:464px;height:395px;border:1px solid #dcdcdc"></div>
<div class="abs" style="left:734px;top:432px;width:71px;height:16px;background:#f0f0f0"></div>
<span class="t" id="t16" style="left:737.00px;top:433.57px;font-size:12.5px;color:#000;">הפרדות צבע</span>
<div class="abs" style="left:743px;top:459px;width:434px;height:242px;border:1px solid #828790;background:#fff"></div>
<div class="abs" style="left:1044px;top:461px;width:1px;height:24px;background:#e5e5e5"></div>
<div class="abs" style="left:751px;top:488px;width:11px;height:11px;border:1px solid #8e8f8f;background:#fff"></div><svg class="abs" style="left:751px;top:488px" width="11" height="11" viewBox="0 0 11 11"><path d="M2.4,5.2 L4.4,7.4 L8.6,2.8" fill="none" stroke="#000" stroke-width="1.7"/></svg>
<span class="t" id="t17" style="left:801.25px;top:487.87px;font-size:12.5px;color:#000;">לוחות פרוצס</span>
<div class="abs" style="left:751px;top:507px;width:11px;height:11px;border:1px solid #8e8f8f;background:#fff"></div><svg class="abs" style="left:751px;top:507px" width="11" height="11" viewBox="0 0 11 11"><path d="M2.4,5.2 L4.4,7.4 L8.6,2.8" fill="none" stroke="#000" stroke-width="1.7"/></svg>
<div class="abs" style="left:775px;top:503px;width:20px;height:19px;background:#00ffff"></div>
<span class="t" id="t18" style="left:801.25px;top:506.87px;font-size:12.5px;color:#000;">פרוצס ציאן</span>
<span class="t" id="t19" style="left:980.80px;top:506.67px;font-size:12.2px;color:#000;">0%</span>
<div class="abs" style="left:751px;top:526px;width:11px;height:11px;border:1px solid #8e8f8f;background:#fff"></div><svg class="abs" style="left:751px;top:526px" width="11" height="11" viewBox="0 0 11 11"><path d="M2.4,5.2 L4.4,7.4 L8.6,2.8" fill="none" stroke="#000" stroke-width="1.7"/></svg>
<div class="abs" style="left:775px;top:522px;width:20px;height:19px;background:#ff00ff"></div>
<span class="t" id="t20" style="left:801.25px;top:525.87px;font-size:12.5px;color:#000;">פרוצס מגנטה</span>
<span class="t" id="t21" style="left:980.80px;top:525.67px;font-size:12.2px;color:#000;">0%</span>
<div class="abs" style="left:751px;top:545px;width:11px;height:11px;border:1px solid #8e8f8f;background:#fff"></div><svg class="abs" style="left:751px;top:545px" width="11" height="11" viewBox="0 0 11 11"><path d="M2.4,5.2 L4.4,7.4 L8.6,2.8" fill="none" stroke="#000" stroke-width="1.7"/></svg>
<div class="abs" style="left:775px;top:541px;width:20px;height:19px;background:#ffff00"></div>
<span class="t" id="t22" style="left:801.25px;top:544.87px;font-size:12.5px;color:#000;">פרוצס צהוב</span>
<span class="t" id="t23" style="left:980.80px;top:544.67px;font-size:12.2px;color:#000;">0%</span>
<div class="abs" style="left:751px;top:564px;width:11px;height:11px;border:1px solid #8e8f8f;background:#fff"></div><svg class="abs" style="left:751px;top:564px" width="11" height="11" viewBox="0 0 11 11"><path d="M2.4,5.2 L4.4,7.4 L8.6,2.8" fill="none" stroke="#000" stroke-width="1.7"/></svg>
<div class="abs" style="left:775px;top:560px;width:20px;height:19px;background:#000000"></div>
<span class="t" id="t24" style="left:801.25px;top:563.87px;font-size:12.5px;color:#000;">פרוצס שחור</span>
<span class="t" id="t25" style="left:980.80px;top:563.67px;font-size:12.2px;color:#000;">0%</span>
<span class="t" id="t26" style="left:743.30px;top:716.92px;font-size:12.5px;color:#000;">גודל דגימה:</span>
<div class="abs" style="left:832px;top:711px;width:345px;height:24px;border:1px solid #adadad;background:#e5e5e5"></div><div class="abs" style="left:835px;top:714px;width:322px;height:18px;background:#fff"></div>
<span class="t" id="t27" style="left:837.50px;top:716.17px;font-size:12.5px;color:#000;">דגימת נקודה</span>
<svg class="abs" style="left:1162.0px;top:720.0px" width="11" height="7" viewBox="-1 -1 11 7"><path d="M0,0 L4.5,4.5 L9,0" fill="none" stroke="#444" stroke-width="1.2"/></svg>
<div class="abs" style="left:743px;top:752px;width:13px;height:13px;border:1px solid #333;background:#fff"></div>
<span class="t" id="t28" style="left:759.20px;top:751.92px;font-size:12.5px;color:#000;">כיסוי שטח כולל</span>
<div class="abs" style="left:891px;top:750px;width:20px;height:18px;border:1px solid #adadad;background:#e1e1e1"></div>
<div class="abs" style="left:894px;top:753px;width:14px;height:12px;background:#000"></div>
<div class="abs" style="left:922px;top:746px;width:50px;height:24px;border:1px solid #d9d9d9;background:#fff"></div><div class="abs" style="left:926px;top:751px;width:24px;height:14px;background:#efefef"></div>
<span class="t" id="t29" style="left:926.00px;top:751.67px;font-size:12.2px;color:#6d6d6d;">280</span>
<svg class="abs" style="left:957.2px;top:755.3px" width="11" height="7" viewBox="-1 -1 11 7"><path d="M0,0 L4.5,4.5 L9,0" fill="none" stroke="#a0a0a0" stroke-width="1.2"/></svg>
<span class="t" id="t30" style="left:982.50px;top:752.17px;font-size:12.2px;color:#000;">%</span>
<div class="abs" style="left:743px;top:784px;width:13px;height:13px;border:1px solid #333;background:#fff"></div>
<span class="t" id="t31" style="left:759.20px;top:784.17px;font-size:12.5px;color:#000;">קבע צבע רקע לעמוד</span>
<div class="abs" style="left:927px;top:782px;width:20px;height:18px;border:1px solid #adadad;background:#e1e1e1"></div>
<div class="abs" style="left:930px;top:785px;width:14px;height:12px;background:#f0f0d2;border:1px solid #c8c8b4"></div>
<span class="t" id="t32" style="left:743.30px;top:812.37px;font-size:12.5px;color:#000;">מרחב צבע של מיזוג שקיפות:</span>
<span class="t" id="t33" style="left:953.10px;top:812.17px;font-size:12.2px;color:#000;">DeviceCMYK</span>
<div class="abs" style="left:1201px;top:845px;width:2px;height:2px;background:#b8b8b8"></div><div class="abs" style="left:1197px;top:845px;width:2px;height:2px;background:#b8b8b8"></div><div class="abs" style="left:1193px;top:845px;width:2px;height:2px;background:#b8b8b8"></div><div class="abs" style="left:1201px;top:841px;width:2px;height:2px;background:#b8b8b8"></div><div class="abs" style="left:1197px;top:841px;width:2px;height:2px;background:#b8b8b8"></div><div class="abs" style="left:1201px;top:837px;width:2px;height:2px;background:#b8b8b8"></div>
<div class="abs" style="left:770px;top:327px;width:224px;height:24px;border:1px solid #0078d7;background:#cce4f7"></div><div class="abs" style="left:773px;top:330px;width:201px;height:18px;background:#fff"></div>
<span class="t" id="t34" style="left:775.00px;top:332.17px;font-size:12.5px;color:#000;">הכל</span>
<svg class="abs" style="left:978.3px;top:336.1px" width="11" height="7" viewBox="-1 -1 11 7"><path d="M0,0 L4.5,4.5 L9,0" fill="none" stroke="#444" stroke-width="1.2"/></svg>
<div class="abs" style="left:770px;top:351px;width:224px;height:182px;border:1px solid #0078d7;background:#fff;box-shadow:2px 2px 4px rgba(0,0,0,.45)"></div>
<div class="abs" style="left:977px;top:352px;width:16px;height:180px;background:#f0f0f0"></div>
<div class="abs" style="left:977px;top:369px;width:16px;height:70px;background:#c1c1c1"></div>
<svg class="abs" style="left:980.5px;top:357.8px" width="9" height="6" viewBox="-1 -1 9 6"><path d="M0,3.5 L3.5,0 L7,3.5" fill="none" stroke="#505050" stroke-width="1.6"/></svg>
<svg class="abs" style="left:980.5px;top:520.6px" width="9" height="6" viewBox="-1 -1 9 6"><path d="M0,0 L3.5,3.5 L7,0" fill="none" stroke="#505050" stroke-width="1.6"/></svg>
<span class="t" id="t35" style="left:773.50px;top:354.37px;font-size:12.5px;color:#000;">הכל</span>
<span class="t" id="t36" style="left:773.50px;top:372.37px;font-size:12.5px;color:#000;">DeviceCMYK</span>
<span class="t" id="t37" style="left:773.50px;top:390.37px;font-size:12.5px;color:#000;">CMYK שאינו תלוי התקן</span>
<span class="t" id="t38" style="left:773.50px;top:408.37px;font-size:12.5px;color:#000;">צבע ספוט</span>
<span class="t" id="t39" style="left:773.50px;top:426.37px;font-size:12.5px;color:#000;">CMYK וספוט תלויי התקן</span>
<span class="t" id="t40" style="left:773.50px;top:444.37px;font-size:12.5px;color:#000;">לא התקן CMYK או ספוט</span>
<span class="t" id="t41" style="left:773.50px;top:462.37px;font-size:12.5px;color:#000;">CMYK</span>
<div class="abs" style="left:771px;top:478px;width:205px;height:18px;background:#0078d7;outline:1px dotted #e8a060;outline-offset:-1px"></div>
<span class="t" id="t42" style="left:773.50px;top:480.37px;font-size:12.5px;color:#fff;">RGB</span>
<span class="t" id="t43" style="left:773.50px;top:498.37px;font-size:12.5px;color:#000;">RGB של ההתקן</span>
<span class="t" id="t44" style="left:773.50px;top:516.37px;font-size:12.5px;color:#000;">אפור</span>
</div>
</body>
</html>
